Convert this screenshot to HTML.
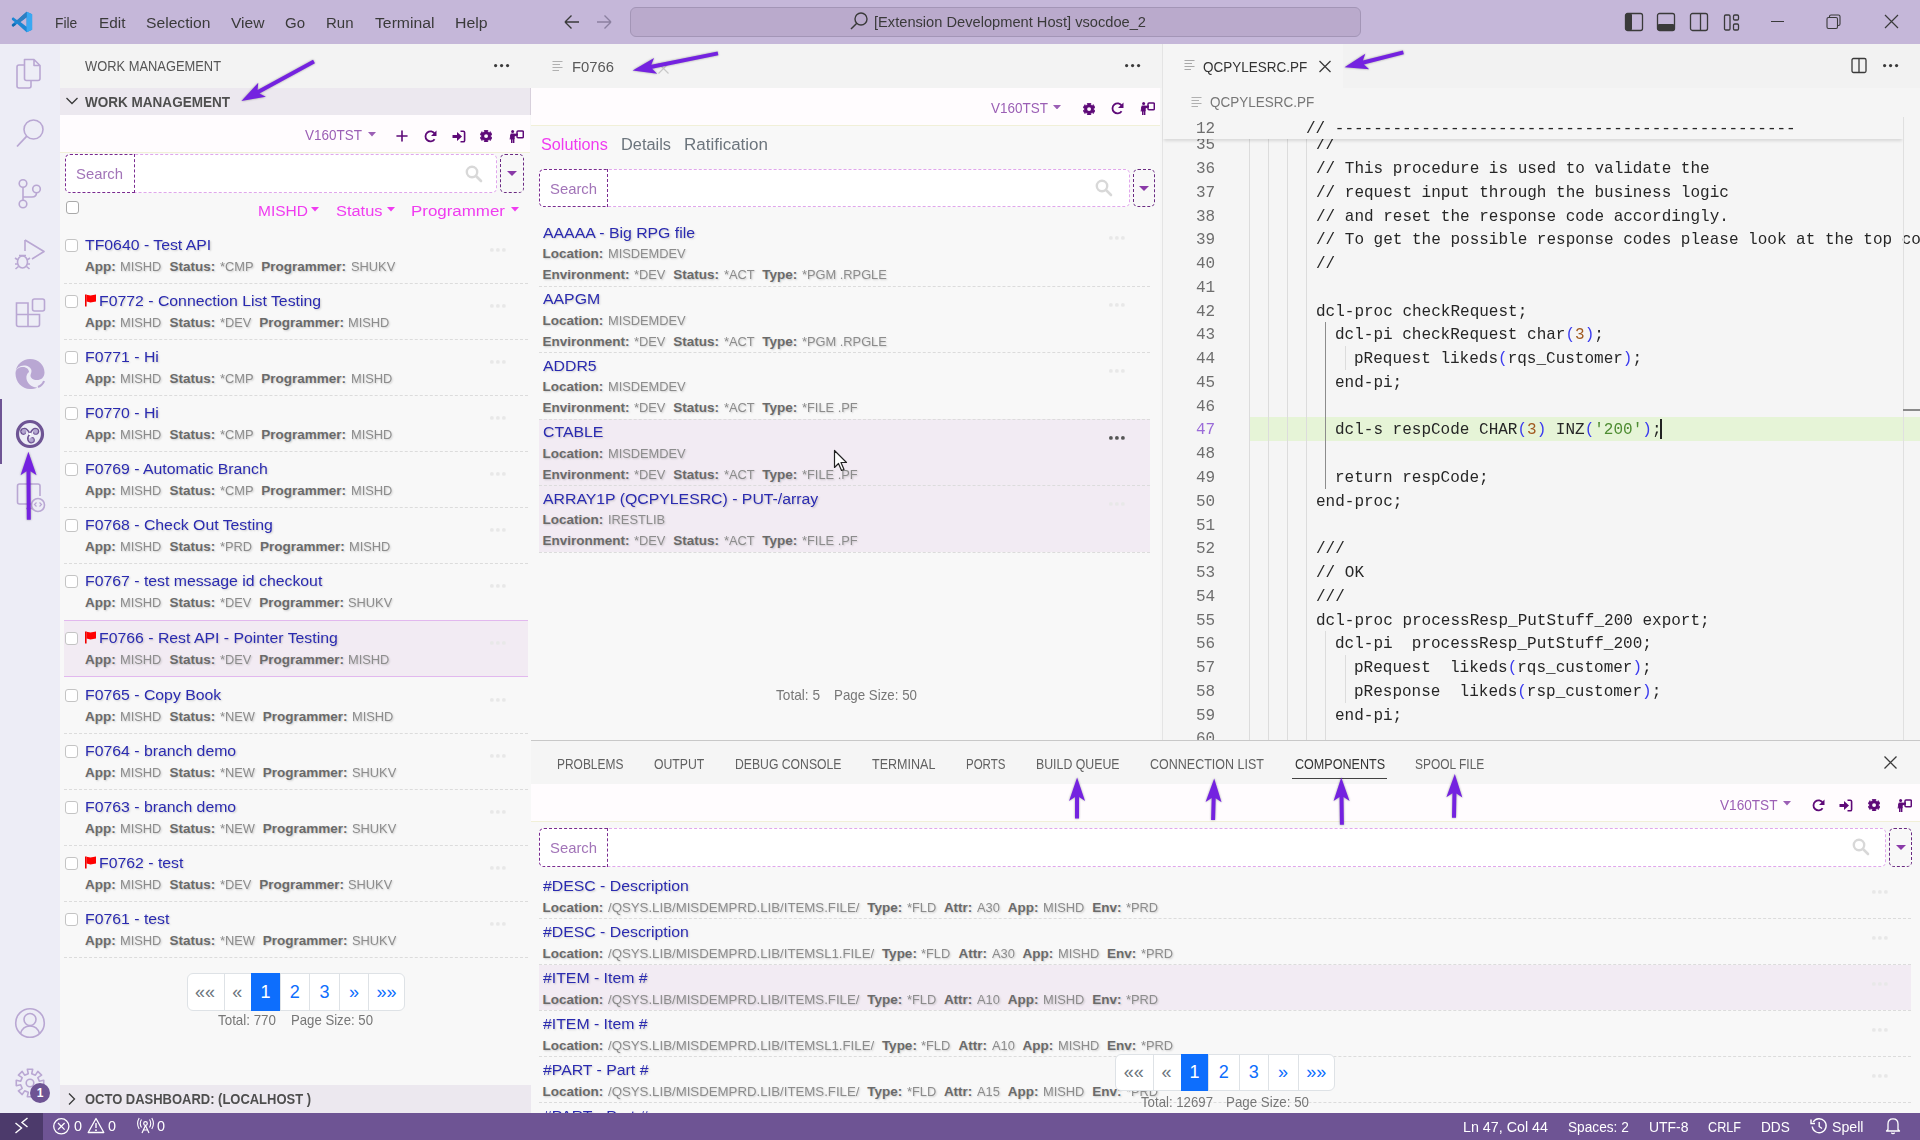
<!DOCTYPE html><html><head><meta charset="utf-8"><style>html,body{margin:0;padding:0;width:1920px;height:1140px;overflow:hidden;background:#f8f8f8;position:relative}</style></head><body><div style="position:absolute;left:0px;top:0px;width:1920px;height:44px;background:#c5b7d9"></div><div style="position:absolute;left:0px;top:44px;width:60px;height:1069px;background:#ededf6"></div><div style="position:absolute;left:60px;top:44px;width:471px;height:44px;background:#f3f3f3"></div><div style="position:absolute;left:60px;top:88px;width:471px;height:27px;background:#ece8ef"></div><div style="position:absolute;left:60px;top:115px;width:470px;height:970px;background:#f8f8f8"></div><div style="position:absolute;left:60px;top:115px;width:470px;height:38px;background:#fffcfe;border-bottom:1px solid #f1f0d8;box-sizing:border-box"></div><div style="position:absolute;left:60px;top:1085px;width:471px;height:28px;background:#ece8ef"></div><div style="position:absolute;left:530px;top:88px;width:1px;height:27px;background:#d8d0dc"></div><div style="position:absolute;left:531px;top:44px;width:632px;height:44px;background:#f3f3f3"></div><div style="position:absolute;left:531px;top:44px;width:147px;height:44px;background:#f3f3f3"></div><div style="position:absolute;left:531px;top:88px;width:629px;height:652px;background:#f8f8f8"></div><div style="position:absolute;left:531px;top:88px;width:629px;height:38px;background:#fffcfe;border-bottom:1px solid #f1f0d8;box-sizing:border-box"></div><div style="position:absolute;left:1160px;top:88px;width:3px;height:652px;background:#f6f6f6"></div><div style="position:absolute;left:1162px;top:44px;width:1px;height:696px;background:#e4e4e4"></div><div style="position:absolute;left:1163px;top:44px;width:757px;height:696px;background:#f5f5f5"></div><div style="position:absolute;left:531px;top:740px;width:1389px;height:1px;background:#c8c8c8"></div><div style="position:absolute;left:531px;top:741px;width:1389px;height:43px;background:#f5f5f5"></div><div style="position:absolute;left:531px;top:784px;width:1389px;height:329px;background:#f8f8f8"></div><div style="position:absolute;left:531px;top:784px;width:1389px;height:38px;background:#fffcfe;border-bottom:1px solid #f1f0d8;box-sizing:border-box"></div><svg style="position:absolute;left:11px;top:11px;" width="22" height="22" viewBox="0 0 22 22"><g transform="scale(0.22)"><path fill-rule="evenodd" fill="#1c87d4" d="M71 3 L96 15 L96 85 L71 97 L28 58 L10 72 L4 67 L4 33 L10 28 L28 42 Z M71 28 L43 50 L71 72 Z M4 40 L17 50 L4 60 Z"/><path fill="#3aa8f2" d="M71 3 L96 15 L96 85 L71 97 Z"/><path fill="#2f7fc2" d="M71 3 L71 28 L38 53 L26 43 Z"/><path fill="#1269b0" d="M4 63 L4 67 L10 72 L23 62 L16 56 Z"/></g></svg><div style="position:absolute;left:55px;top:14.88px;font:400 15.5px/15.5px 'Liberation Sans', sans-serif;color:#3a3a3a;white-space:pre;transform:scaleX(0.8928);transform-origin:0 0;">File</div><div style="position:absolute;left:98.6px;top:14.88px;font:400 15.5px/15.5px 'Liberation Sans', sans-serif;color:#3a3a3a;white-space:pre;transform:scaleX(0.9884);transform-origin:0 0;">Edit</div><div style="position:absolute;left:145.6px;top:14.88px;font:400 15.5px/15.5px 'Liberation Sans', sans-serif;color:#3a3a3a;white-space:pre;transform:scaleX(1.0100);transform-origin:0 0;">Selection</div><div style="position:absolute;left:231px;top:14.88px;font:400 15.5px/15.5px 'Liberation Sans', sans-serif;color:#3a3a3a;white-space:pre;transform:scaleX(1.0055);transform-origin:0 0;">View</div><div style="position:absolute;left:285px;top:14.88px;font:400 15.5px/15.5px 'Liberation Sans', sans-serif;color:#3a3a3a;white-space:pre;transform:scaleX(0.9673);transform-origin:0 0;">Go</div><div style="position:absolute;left:326px;top:14.88px;font:400 15.5px/15.5px 'Liberation Sans', sans-serif;color:#3a3a3a;white-space:pre;transform:scaleX(0.9671);transform-origin:0 0;">Run</div><div style="position:absolute;left:374.5px;top:14.88px;font:400 15.5px/15.5px 'Liberation Sans', sans-serif;color:#3a3a3a;white-space:pre;transform:scaleX(1.0159);transform-origin:0 0;">Terminal</div><div style="position:absolute;left:455px;top:14.88px;font:400 15.5px/15.5px 'Liberation Sans', sans-serif;color:#3a3a3a;white-space:pre;transform:scaleX(1.0226);transform-origin:0 0;">Help</div><svg style="position:absolute;left:562px;top:12px;" width="20" height="20" viewBox="0 0 20 20"><path d="M3 10 H17 M3 10 L9.5 3.5 M3 10 L9.5 16.5" stroke="#3a3a3a" stroke-width="1.4" fill="none"/></svg><svg style="position:absolute;left:594px;top:12px;" width="20" height="20" viewBox="0 0 20 20"><path d="M17 10 H3 M17 10 L10.5 3.5 M17 10 L10.5 16.5" stroke="#8c80a0" stroke-width="1.4" fill="none"/></svg><div style="position:absolute;left:630px;top:7px;width:731px;height:30px;background:#baaacc;border:1px solid #a395b6;border-radius:6px;box-sizing:border-box"></div><svg style="position:absolute;left:849px;top:11px;" width="20" height="20" viewBox="0 0 20 20"><circle cx="12" cy="8" r="6" stroke="#3a3a3a" stroke-width="1.4" fill="none"/><path d="M7.8 12.2 L2 18" stroke="#3a3a3a" stroke-width="1.5"/></svg><div style="position:absolute;left:874px;top:14.38px;font:400 15.5px/15.5px 'Liberation Sans', sans-serif;color:#3a3a3a;white-space:pre;transform:scaleX(0.9452);transform-origin:0 0;">[Extension Development Host] vsocdoe_2</div><svg style="position:absolute;left:1624px;top:12px;" width="20" height="20" viewBox="0 0 20 20"><rect x="1.5" y="1.5" width="17" height="17" rx="2" fill="none" stroke="#3a3a3a" stroke-width="1.3"/><rect x="1.5" y="1.5" width="6.5" height="17" rx="1.5" fill="#3a3a3a"/></svg><svg style="position:absolute;left:1656px;top:12px;" width="20" height="20" viewBox="0 0 20 20"><rect x="1.5" y="1.5" width="17" height="17" rx="2" fill="none" stroke="#3a3a3a" stroke-width="1.3"/><rect x="1.5" y="12" width="17" height="6.5" rx="1.5" fill="#3a3a3a"/></svg><svg style="position:absolute;left:1689px;top:12px;" width="20" height="20" viewBox="0 0 20 20"><rect x="1.5" y="1.5" width="17" height="17" rx="2" fill="none" stroke="#3a3a3a" stroke-width="1.3"/><path d="M11.5 1.5 V18.5" stroke="#3a3a3a" stroke-width="1.3"/></svg><svg style="position:absolute;left:1722px;top:12px;" width="20" height="20" viewBox="0 0 20 20"><rect x="2.5" y="3" width="5.5" height="15" rx="1.2" fill="none" stroke="#3a3a3a" stroke-width="1.3"/><rect x="11.5" y="3" width="5" height="5" rx="1.2" fill="none" stroke="#3a3a3a" stroke-width="1.3"/><rect x="11.5" y="12" width="5" height="6" rx="1.2" fill="none" stroke="#3a3a3a" stroke-width="1.3"/></svg><div style="position:absolute;left:1771px;top:21px;width:13px;height:1px;background:#3a3a3a"></div><svg style="position:absolute;left:1825px;top:13px;" width="18" height="18" viewBox="0 0 18 18"><rect x="2" y="4.5" width="10.5" height="11" rx="1.5" fill="none" stroke="#3a3a3a" stroke-width="1.1"/><path d="M4.5 4.5 V3.5 Q4.5 2 6 2 H13.5 Q15 2 15 3.5 V11 Q15 12.5 13.5 12.5 H12.5" fill="none" stroke="#3a3a3a" stroke-width="1.1"/></svg><svg style="position:absolute;left:1883px;top:13px;" width="17" height="17" viewBox="0 0 17 17"><path d="M2 2 L15 15 M15 2 L2 15" stroke="#3a3a3a" stroke-width="1.2"/></svg><svg style="position:absolute;left:14px;top:56px;" width="32" height="34" viewBox="0 0 32 34"><path d="M10.5 3.5 H20 L26 9.5 V22.5 Q26 24.5 24 24.5 H12.5 Q10.5 24.5 10.5 22.5 Z M20 3.5 V9.5 H26" fill="none" stroke="#b9a7d3" stroke-width="1.6" stroke-linejoin="round"/><path d="M10.5 9 H5 Q3 9 3 11 V30 Q3 32 5 32 H15 Q17 32 17 30 V24.5" fill="none" stroke="#b9a7d3" stroke-width="1.6"/></svg><svg style="position:absolute;left:14px;top:114px;" width="34" height="36" viewBox="0 0 34 36"><circle cx="19.5" cy="15.5" r="9.5" fill="none" stroke="#b9a7d3" stroke-width="1.6"/><path d="M12.8 22.2 L3 32.5" stroke="#b9a7d3" stroke-width="1.8"/></svg><svg style="position:absolute;left:14px;top:174px;" width="30" height="36" viewBox="0 0 30 36"><circle cx="9" cy="9.5" r="3.8" fill="none" stroke="#b9a7d3" stroke-width="1.6"/><circle cx="22.5" cy="15" r="3.8" fill="none" stroke="#b9a7d3" stroke-width="1.6"/><circle cx="9" cy="30" r="3.8" fill="none" stroke="#b9a7d3" stroke-width="1.6"/><path d="M9 13.3 V26.2 M22.5 18.8 Q22.5 23 18 23 H9" fill="none" stroke="#b9a7d3" stroke-width="1.6"/></svg><svg style="position:absolute;left:12px;top:236px;" width="34" height="36" viewBox="0 0 34 36"><path d="M13 4 L32 15.5 L20 23" fill="none" stroke="#b9a7d3" stroke-width="1.6" stroke-linejoin="round"/><path d="M13 4 V15" stroke="#b9a7d3" stroke-width="1.6"/><ellipse cx="10.5" cy="26" rx="5" ry="6" fill="none" stroke="#b9a7d3" stroke-width="1.6"/><path d="M3 22 L6 24 M3 28 H5.5 M3.5 33 L6.5 30.5 M18 22 L15 24 M18 28 H15.5 M17.5 33 L14.5 30.5 M7 19.5 L14 19.5" stroke="#b9a7d3" stroke-width="1.6"/></svg><svg style="position:absolute;left:13px;top:296px;" width="34" height="34" viewBox="0 0 34 34"><path d="M3.5 7 H15 V30.5 H5.5 Q3.5 30.5 3.5 28.5 Z M3.5 18.5 H26.5 V28.5 Q26.5 30.5 24.5 30.5 H15" fill="none" stroke="#b9a7d3" stroke-width="1.6"/><rect x="19.5" y="3" width="12" height="12" rx="2" fill="none" stroke="#b9a7d3" stroke-width="1.6"/></svg><svg style="position:absolute;left:14px;top:357px;" width="32" height="33" viewBox="0 0 32 33"><path d="M16 2 C24.5 2 30.5 8 30.5 15.5 C30.5 20.5 27 23 23 23 C19 23 16.5 21 16.5 18.5 C16.5 17 17.5 16 17.5 14 C17.5 10.5 13.5 8.5 10 8.5 C5.5 8.5 2 11.5 1.5 15 C2.5 7.5 8.5 2 16 2 Z" fill="#b9a7d3"/><path d="M1.5 16.5 C1.5 11.5 5.5 10 9 10 C12.5 10 15 12.5 15 15 C13 16.5 12 19 12.5 22 C13.5 27 18.5 31 23.5 30.5 C21.5 31.5 18.5 32 16 32 C8 32 1.5 25 1.5 16.5 Z" fill="#b9a7d3"/><path d="M24 30 C27.5 28.5 29.5 26 30 24" stroke="#b9a7d3" stroke-width="2" fill="none"/></svg><div style="position:absolute;left:0px;top:399px;width:2px;height:65px;background:#6e5494"></div><svg style="position:absolute;left:15px;top:419px;" width="30" height="30" viewBox="0 0 30 30"><circle cx="15" cy="15" r="12.5" fill="none" stroke="#6e5494" stroke-width="3.2"/><g fill="none" stroke="#6e5494" stroke-width="1.6"><path d="M15 15 Q12 9 9 9.5 Q5.5 10 6 13 Q6.5 15.5 9 15 Q11 14.5 10 12.5"/><path d="M15 15 Q17 10 20 9.5 Q23.5 9.5 23.5 12.5 Q23 15.5 20 15 Q18.5 14.5 19 13"/><path d="M15 15 Q12 18 13 21 Q14 24 17 23.5 Q19.5 23 19 20.5 Q18.5 18.5 16.5 19"/></g><g fill="#a898c8" opacity="0.8"><circle cx="9" cy="12.5" r="2.4"/><circle cx="20.5" cy="12.5" r="2.4"/><circle cx="16.5" cy="21" r="2.4"/></g><circle cx="15" cy="15" r="1.2" fill="#fff"/></svg><svg style="position:absolute;left:14px;top:480px;" width="32" height="34" viewBox="0 0 32 34"><path d="M22 24 H5.5 Q3.5 24 3.5 22 V6 Q3.5 4 5.5 4 H24 Q26 4 26 6 V16" fill="none" stroke="#b9a7d3" stroke-width="1.6"/><path d="M12 28.5 H19" stroke="#b9a7d3" stroke-width="1.6"/><circle cx="24" cy="25" r="6.5" fill="#ededf6" stroke="#b9a7d3" stroke-width="1.6"/><path d="M22.5 22.5 L20.5 24.5 L22.5 26.5 M25.5 22.5 L27.5 24.5 L25.5 26.5" fill="none" stroke="#b9a7d3" stroke-width="1.2"/></svg><svg style="position:absolute;left:14px;top:1007px;" width="32" height="32" viewBox="0 0 32 32"><circle cx="16" cy="16" r="14.3" fill="none" stroke="#b9a7d3" stroke-width="1.6"/><circle cx="16" cy="12.5" r="6" fill="none" stroke="#b9a7d3" stroke-width="1.6"/><path d="M6.5 26.5 C8 21.5 11.5 19 16 19 C20.5 19 24 21.5 25.5 26.5" fill="none" stroke="#b9a7d3" stroke-width="1.6"/></svg><svg style="position:absolute;left:14px;top:1067px;" width="32" height="32" viewBox="0 0 32 32"><path d="M29.74 13.33 L29.74 18.67 L25.34 17.73 L23.83 21.38 L27.61 23.83 L23.83 27.61 L21.38 23.83 L17.73 25.34 L18.67 29.74 L13.33 29.74 L14.27 25.34 L10.62 23.83 L8.17 27.61 L4.39 23.83 L8.17 21.38 L6.66 17.73 L2.26 18.67 L2.26 13.33 L6.66 14.27 L8.17 10.62 L4.39 8.17 L8.17 4.39 L10.62 8.17 L14.27 6.66 L13.33 2.26 L18.67 2.26 L17.73 6.66 L21.38 8.17 L23.83 4.39 L27.61 8.17 L23.83 10.62 L25.34 14.27 Z" fill="none" stroke="#b9a7d3" stroke-width="1.6" stroke-linejoin="round"/><circle cx="16" cy="16" r="3.8" fill="none" stroke="#b9a7d3" stroke-width="1.6"/></svg><div style="position:absolute;left:30px;top:1083px;width:20px;height:20px;border-radius:50%;background:#6e5494;color:#fff;font:700 12px/20px 'Liberation Sans',sans-serif;text-align:center">1</div><div style="position:absolute;left:85.3px;top:58.85px;font:400 14px/14px 'Liberation Sans', sans-serif;color:#555;white-space:pre;transform:scaleX(0.9203);transform-origin:0 0;">WORK MANAGEMENT</div><svg style="position:absolute;left:493.4px;top:63.400000000000006px;" width="17.2" height="5.2" viewBox="0 0 17.2 5.2"><circle cx="2.6" cy="2.6" r="1.6" fill="#3a3a3a"/><circle cx="8.6" cy="2.6" r="1.6" fill="#3a3a3a"/><circle cx="14.6" cy="2.6" r="1.6" fill="#3a3a3a"/></svg><svg style="position:absolute;left:65px;top:95px;" width="14" height="12" viewBox="0 0 14 12"><path d="M1.5 3 L7 8.5 L12.5 3" fill="none" stroke="#3a3a3a" stroke-width="1.3"/></svg><div style="position:absolute;left:85.3px;top:95.15px;font:700 14px/14px 'Liberation Sans', sans-serif;color:#4e4e4e;white-space:pre;transform:scaleX(0.9660);transform-origin:0 0;">WORK MANAGEMENT</div><div style="position:absolute;left:305px;top:127.30px;font:400 15px/15px 'Liberation Sans', sans-serif;color:#9b5fb5;white-space:pre;transform:scaleX(0.8996);transform-origin:0 0;">V160TST</div><svg style="position:absolute;left:367.5px;top:132px;" width="8" height="4.5" viewBox="0 0 8 4.5"><path d="M0 0 H8 L4.0 4.5 Z" fill="#9b5fb5"/></svg><svg style="position:absolute;left:396px;top:130px;" width="12" height="12" viewBox="0 0 12 12"><path d="M6 1 V11 M1 6 H11" stroke="#5e0a78" stroke-width="1.6" stroke-linecap="round"/></svg><svg style="position:absolute;left:424.0px;top:129.8px;" width="13" height="13" viewBox="0 0 13 13"><path d="M10.8 3.8 A5 5 0 1 0 10.6 9.2" fill="none" stroke="#5e0a78" stroke-width="1.8"/><path d="M12.5 0.5 V6 H7 Z" fill="#5e0a78"/></svg><svg style="position:absolute;left:451.5px;top:129.8px;" width="14" height="13" viewBox="0 0 14 13"><path d="M0.5 5 H5 V2 L10 6.5 L5 11 V8 H0.5 Z" fill="#5e0a78"/><path d="M8.5 1.2 H11.2 Q12.6 1.2 12.6 2.6 V10.4 Q12.6 11.8 11.2 11.8 H8.5" fill="none" stroke="#5e0a78" stroke-width="1.6"/></svg><svg style="position:absolute;left:479.9px;top:129.9px;" width="12.2" height="12.2" viewBox="0 0 12.2 12.2"><path d="M7.88 11.93 L4.32 11.93 L4.74 10.53 L2.94 9.49 L1.94 10.56 L0.16 7.47 L1.58 7.14 L1.58 5.06 L0.16 4.73 L1.94 1.64 L2.94 2.71 L4.74 1.67 L4.32 0.27 L7.88 0.27 L7.46 1.67 L9.26 2.71 L10.26 1.64 L12.04 4.73 L10.62 5.06 L10.62 7.14 L12.04 7.47 L10.26 10.56 L9.26 9.49 L7.46 10.53 Z" fill="#5e0a78" stroke="#5e0a78" stroke-width="0.8" stroke-linejoin="round"/><circle cx="6.1" cy="6.1" r="1.95" fill="#fffcfe"/></svg><svg style="position:absolute;left:508px;top:129.5px;" width="16" height="13" viewBox="0 0 16 13"><circle cx="4.6" cy="1.6" r="1.5" fill="#5e0a78"/><rect x="2.3" y="3.6" width="4.4" height="6" rx="1.3" fill="#5e0a78"/><path d="M1.6 9.5 L2.3 5 H3 L2.6 9.5 Z" fill="#5e0a78"/><rect x="3" y="8.5" width="1.5" height="4.5" fill="#5e0a78"/><rect x="4.9" y="8.5" width="1.5" height="4.5" fill="#5e0a78"/><path d="M5.5 3.8 L10 3.4 L10 5.4 L6 6.4 Z" fill="#5e0a78"/><rect x="9" y="0.9" width="6.3" height="6.9" rx="1" fill="none" stroke="#5e0a78" stroke-width="1.5"/></svg><div style="position:absolute;left:65px;top:154px;width:432px;height:39px;border:1px dashed #e0a6ec;border-radius:5px;background:#fff;box-sizing:border-box"></div><div style="position:absolute;left:65px;top:154px;width:70px;height:39px;border:1.5px dashed #7a2a90;border-radius:5px 0 0 5px;background:#fff;box-sizing:border-box"></div><div style="position:absolute;left:75.5px;top:166.10px;font:400 15px/15px 'Liberation Sans', sans-serif;color:#a274b8;white-space:pre;transform:scaleX(0.9889);transform-origin:0 0;">Search</div><svg style="position:absolute;left:465px;top:165px;" width="18" height="18" viewBox="0 0 18 18"><circle cx="7" cy="7" r="5.2" fill="none" stroke="#d8d8d8" stroke-width="2.4"/><path d="M11 11 L16 16" stroke="#d8d8d8" stroke-width="2.6" stroke-linecap="round"/></svg><div style="position:absolute;left:500px;top:154px;width:24px;height:39px;border:1.5px dashed #6a2a82;border-radius:5px;box-sizing:border-box"></div><svg style="position:absolute;left:507.0px;top:171.0px;" width="10" height="5" viewBox="0 0 10 5"><path d="M0 0 H10 L5.0 5 Z" fill="#8a3aa8"/></svg><div style="position:absolute;left:66px;top:201px;width:13px;height:13px;border:1px solid #a9a9a9;border-radius:3px;background:#fff;box-sizing:border-box"></div><div style="position:absolute;left:257.5px;top:202.88px;font:400 15.5px/15.5px 'Liberation Sans', sans-serif;color:#f03cf0;white-space:pre;transform:scaleX(1.0011);transform-origin:0 0;">MISHD</div><svg style="position:absolute;left:311px;top:207px;" width="8" height="4.5" viewBox="0 0 8 4.5"><path d="M0 0 H8 L4.0 4.5 Z" fill="#f03cf0"/></svg><div style="position:absolute;left:335.5px;top:202.88px;font:400 15.5px/15.5px 'Liberation Sans', sans-serif;color:#f03cf0;white-space:pre;transform:scaleX(1.0582);transform-origin:0 0;">Status</div><svg style="position:absolute;left:386.5px;top:207px;" width="8" height="4.5" viewBox="0 0 8 4.5"><path d="M0 0 H8 L4.0 4.5 Z" fill="#f03cf0"/></svg><div style="position:absolute;left:410.5px;top:202.88px;font:400 15.5px/15.5px 'Liberation Sans', sans-serif;color:#f03cf0;white-space:pre;transform:scaleX(1.0914);transform-origin:0 0;">Programmer</div><svg style="position:absolute;left:510.5px;top:207px;" width="8" height="4.5" viewBox="0 0 8 4.5"><path d="M0 0 H8 L4.0 4.5 Z" fill="#f03cf0"/></svg><div style="position:absolute;left:64.5px;top:239px;width:13px;height:13px;border:1px solid #c4c4c4;border-radius:3px;background:#fff;box-sizing:border-box"></div><div style="position:absolute;left:85px;top:236.88px;font:400 15.5px/15.5px 'Liberation Sans', sans-serif;color:#2a2ab0;white-space:pre;transform:scaleX(1.0200);transform-origin:0 0;text-shadow:1px 1px 2px rgba(0,0,0,0.18);">TF0640 - Test API</div><div style="position:absolute;left:85px;top:259.57px;font:700 13.5px/13.5px 'Liberation Sans', sans-serif;color:#6a6a6a;white-space:pre;transform:scaleX(1.0000);transform-origin:0 0;text-shadow:1px 1px 2px rgba(0,0,0,0.18);">App:</div><div style="position:absolute;left:120.2390625px;top:259.57px;font:400 13.5px/13.5px 'Liberation Sans', sans-serif;color:#8c8c8c;white-space:pre;transform:scaleX(0.9500);transform-origin:0 0;text-shadow:1px 1px 2px rgba(0,0,0,0.18);">MISHD</div><div style="position:absolute;left:169.5640625px;top:259.57px;font:700 13.5px/13.5px 'Liberation Sans', sans-serif;color:#6a6a6a;white-space:pre;transform:scaleX(1.0000);transform-origin:0 0;text-shadow:1px 1px 2px rgba(0,0,0,0.18);">Status:</div><div style="position:absolute;left:219.8171875px;top:259.57px;font:400 13.5px/13.5px 'Liberation Sans', sans-serif;color:#8c8c8c;white-space:pre;transform:scaleX(0.9500);transform-origin:0 0;text-shadow:1px 1px 2px rgba(0,0,0,0.18);">*CMP</div><div style="position:absolute;left:261.30765625px;top:259.57px;font:700 13.5px/13.5px 'Liberation Sans', sans-serif;color:#6a6a6a;white-space:pre;transform:scaleX(1.0000);transform-origin:0 0;text-shadow:1px 1px 2px rgba(0,0,0,0.18);">Programmer:</div><div style="position:absolute;left:350.58265625px;top:259.57px;font:400 13.5px/13.5px 'Liberation Sans', sans-serif;color:#8c8c8c;white-space:pre;transform:scaleX(0.9500);transform-origin:0 0;text-shadow:1px 1px 2px rgba(0,0,0,0.18);">SHUKV</div><svg style="position:absolute;left:489.1px;top:247.1px;" width="17.8" height="5.8" viewBox="0 0 17.8 5.8"><circle cx="2.9" cy="2.9" r="1.9" fill="#e8e8e8"/><circle cx="8.9" cy="2.9" r="1.9" fill="#e8e8e8"/><circle cx="14.9" cy="2.9" r="1.9" fill="#e8e8e8"/></svg><div style="position:absolute;left:64px;top:283px;width:464px;height:0;border-top:1px dashed #dcdcdc"></div><div style="position:absolute;left:64.5px;top:295px;width:13px;height:13px;border:1px solid #c4c4c4;border-radius:3px;background:#fff;box-sizing:border-box"></div><svg style="position:absolute;left:85px;top:294px;" width="12" height="13" viewBox="0 0 12 13"><path d="M0.8 0.5 V12.5" stroke="#e00" stroke-width="1.6"/><path d="M1.5 0.8 L5.5 1.6 L11 0.6 V7.6 L5.5 8.4 L1.5 7.6 Z" fill="#f00"/></svg><div style="position:absolute;left:98.5px;top:292.88px;font:400 15.5px/15.5px 'Liberation Sans', sans-serif;color:#2a2ab0;white-space:pre;transform:scaleX(1.0200);transform-origin:0 0;text-shadow:1px 1px 2px rgba(0,0,0,0.18);">F0772 - Connection List Testing</div><div style="position:absolute;left:85px;top:315.57px;font:700 13.5px/13.5px 'Liberation Sans', sans-serif;color:#6a6a6a;white-space:pre;transform:scaleX(1.0000);transform-origin:0 0;text-shadow:1px 1px 2px rgba(0,0,0,0.18);">App:</div><div style="position:absolute;left:120.2390625px;top:315.57px;font:400 13.5px/13.5px 'Liberation Sans', sans-serif;color:#8c8c8c;white-space:pre;transform:scaleX(0.9500);transform-origin:0 0;text-shadow:1px 1px 2px rgba(0,0,0,0.18);">MISHD</div><div style="position:absolute;left:169.5640625px;top:315.57px;font:700 13.5px/13.5px 'Liberation Sans', sans-serif;color:#6a6a6a;white-space:pre;transform:scaleX(1.0000);transform-origin:0 0;text-shadow:1px 1px 2px rgba(0,0,0,0.18);">Status:</div><div style="position:absolute;left:219.8171875px;top:315.57px;font:400 13.5px/13.5px 'Liberation Sans', sans-serif;color:#8c8c8c;white-space:pre;transform:scaleX(0.9500);transform-origin:0 0;text-shadow:1px 1px 2px rgba(0,0,0,0.18);">*DEV</div><div style="position:absolute;left:259.1790625px;top:315.57px;font:700 13.5px/13.5px 'Liberation Sans', sans-serif;color:#6a6a6a;white-space:pre;transform:scaleX(1.0000);transform-origin:0 0;text-shadow:1px 1px 2px rgba(0,0,0,0.18);">Programmer:</div><div style="position:absolute;left:348.45406249999996px;top:315.57px;font:400 13.5px/13.5px 'Liberation Sans', sans-serif;color:#8c8c8c;white-space:pre;transform:scaleX(0.9500);transform-origin:0 0;text-shadow:1px 1px 2px rgba(0,0,0,0.18);">MISHD</div><svg style="position:absolute;left:489.1px;top:303.1px;" width="17.8" height="5.8" viewBox="0 0 17.8 5.8"><circle cx="2.9" cy="2.9" r="1.9" fill="#e8e8e8"/><circle cx="8.9" cy="2.9" r="1.9" fill="#e8e8e8"/><circle cx="14.9" cy="2.9" r="1.9" fill="#e8e8e8"/></svg><div style="position:absolute;left:64px;top:339px;width:464px;height:0;border-top:1px dashed #dcdcdc"></div><div style="position:absolute;left:64.5px;top:351px;width:13px;height:13px;border:1px solid #c4c4c4;border-radius:3px;background:#fff;box-sizing:border-box"></div><div style="position:absolute;left:85px;top:348.88px;font:400 15.5px/15.5px 'Liberation Sans', sans-serif;color:#2a2ab0;white-space:pre;transform:scaleX(1.0200);transform-origin:0 0;text-shadow:1px 1px 2px rgba(0,0,0,0.18);">F0771 - Hi</div><div style="position:absolute;left:85px;top:371.57px;font:700 13.5px/13.5px 'Liberation Sans', sans-serif;color:#6a6a6a;white-space:pre;transform:scaleX(1.0000);transform-origin:0 0;text-shadow:1px 1px 2px rgba(0,0,0,0.18);">App:</div><div style="position:absolute;left:120.2390625px;top:371.57px;font:400 13.5px/13.5px 'Liberation Sans', sans-serif;color:#8c8c8c;white-space:pre;transform:scaleX(0.9500);transform-origin:0 0;text-shadow:1px 1px 2px rgba(0,0,0,0.18);">MISHD</div><div style="position:absolute;left:169.5640625px;top:371.57px;font:700 13.5px/13.5px 'Liberation Sans', sans-serif;color:#6a6a6a;white-space:pre;transform:scaleX(1.0000);transform-origin:0 0;text-shadow:1px 1px 2px rgba(0,0,0,0.18);">Status:</div><div style="position:absolute;left:219.8171875px;top:371.57px;font:400 13.5px/13.5px 'Liberation Sans', sans-serif;color:#8c8c8c;white-space:pre;transform:scaleX(0.9500);transform-origin:0 0;text-shadow:1px 1px 2px rgba(0,0,0,0.18);">*CMP</div><div style="position:absolute;left:261.30765625px;top:371.57px;font:700 13.5px/13.5px 'Liberation Sans', sans-serif;color:#6a6a6a;white-space:pre;transform:scaleX(1.0000);transform-origin:0 0;text-shadow:1px 1px 2px rgba(0,0,0,0.18);">Programmer:</div><div style="position:absolute;left:350.58265625px;top:371.57px;font:400 13.5px/13.5px 'Liberation Sans', sans-serif;color:#8c8c8c;white-space:pre;transform:scaleX(0.9500);transform-origin:0 0;text-shadow:1px 1px 2px rgba(0,0,0,0.18);">MISHD</div><svg style="position:absolute;left:489.1px;top:359.1px;" width="17.8" height="5.8" viewBox="0 0 17.8 5.8"><circle cx="2.9" cy="2.9" r="1.9" fill="#e8e8e8"/><circle cx="8.9" cy="2.9" r="1.9" fill="#e8e8e8"/><circle cx="14.9" cy="2.9" r="1.9" fill="#e8e8e8"/></svg><div style="position:absolute;left:64px;top:395px;width:464px;height:0;border-top:1px dashed #dcdcdc"></div><div style="position:absolute;left:64.5px;top:407px;width:13px;height:13px;border:1px solid #c4c4c4;border-radius:3px;background:#fff;box-sizing:border-box"></div><div style="position:absolute;left:85px;top:404.88px;font:400 15.5px/15.5px 'Liberation Sans', sans-serif;color:#2a2ab0;white-space:pre;transform:scaleX(1.0200);transform-origin:0 0;text-shadow:1px 1px 2px rgba(0,0,0,0.18);">F0770 - Hi</div><div style="position:absolute;left:85px;top:427.57px;font:700 13.5px/13.5px 'Liberation Sans', sans-serif;color:#6a6a6a;white-space:pre;transform:scaleX(1.0000);transform-origin:0 0;text-shadow:1px 1px 2px rgba(0,0,0,0.18);">App:</div><div style="position:absolute;left:120.2390625px;top:427.57px;font:400 13.5px/13.5px 'Liberation Sans', sans-serif;color:#8c8c8c;white-space:pre;transform:scaleX(0.9500);transform-origin:0 0;text-shadow:1px 1px 2px rgba(0,0,0,0.18);">MISHD</div><div style="position:absolute;left:169.5640625px;top:427.57px;font:700 13.5px/13.5px 'Liberation Sans', sans-serif;color:#6a6a6a;white-space:pre;transform:scaleX(1.0000);transform-origin:0 0;text-shadow:1px 1px 2px rgba(0,0,0,0.18);">Status:</div><div style="position:absolute;left:219.8171875px;top:427.57px;font:400 13.5px/13.5px 'Liberation Sans', sans-serif;color:#8c8c8c;white-space:pre;transform:scaleX(0.9500);transform-origin:0 0;text-shadow:1px 1px 2px rgba(0,0,0,0.18);">*CMP</div><div style="position:absolute;left:261.30765625px;top:427.57px;font:700 13.5px/13.5px 'Liberation Sans', sans-serif;color:#6a6a6a;white-space:pre;transform:scaleX(1.0000);transform-origin:0 0;text-shadow:1px 1px 2px rgba(0,0,0,0.18);">Programmer:</div><div style="position:absolute;left:350.58265625px;top:427.57px;font:400 13.5px/13.5px 'Liberation Sans', sans-serif;color:#8c8c8c;white-space:pre;transform:scaleX(0.9500);transform-origin:0 0;text-shadow:1px 1px 2px rgba(0,0,0,0.18);">MISHD</div><svg style="position:absolute;left:489.1px;top:415.1px;" width="17.8" height="5.8" viewBox="0 0 17.8 5.8"><circle cx="2.9" cy="2.9" r="1.9" fill="#e8e8e8"/><circle cx="8.9" cy="2.9" r="1.9" fill="#e8e8e8"/><circle cx="14.9" cy="2.9" r="1.9" fill="#e8e8e8"/></svg><div style="position:absolute;left:64px;top:451px;width:464px;height:0;border-top:1px dashed #dcdcdc"></div><div style="position:absolute;left:64.5px;top:463px;width:13px;height:13px;border:1px solid #c4c4c4;border-radius:3px;background:#fff;box-sizing:border-box"></div><div style="position:absolute;left:85px;top:460.88px;font:400 15.5px/15.5px 'Liberation Sans', sans-serif;color:#2a2ab0;white-space:pre;transform:scaleX(1.0200);transform-origin:0 0;text-shadow:1px 1px 2px rgba(0,0,0,0.18);">F0769 - Automatic Branch</div><div style="position:absolute;left:85px;top:483.57px;font:700 13.5px/13.5px 'Liberation Sans', sans-serif;color:#6a6a6a;white-space:pre;transform:scaleX(1.0000);transform-origin:0 0;text-shadow:1px 1px 2px rgba(0,0,0,0.18);">App:</div><div style="position:absolute;left:120.2390625px;top:483.57px;font:400 13.5px/13.5px 'Liberation Sans', sans-serif;color:#8c8c8c;white-space:pre;transform:scaleX(0.9500);transform-origin:0 0;text-shadow:1px 1px 2px rgba(0,0,0,0.18);">MISHD</div><div style="position:absolute;left:169.5640625px;top:483.57px;font:700 13.5px/13.5px 'Liberation Sans', sans-serif;color:#6a6a6a;white-space:pre;transform:scaleX(1.0000);transform-origin:0 0;text-shadow:1px 1px 2px rgba(0,0,0,0.18);">Status:</div><div style="position:absolute;left:219.8171875px;top:483.57px;font:400 13.5px/13.5px 'Liberation Sans', sans-serif;color:#8c8c8c;white-space:pre;transform:scaleX(0.9500);transform-origin:0 0;text-shadow:1px 1px 2px rgba(0,0,0,0.18);">*CMP</div><div style="position:absolute;left:261.30765625px;top:483.57px;font:700 13.5px/13.5px 'Liberation Sans', sans-serif;color:#6a6a6a;white-space:pre;transform:scaleX(1.0000);transform-origin:0 0;text-shadow:1px 1px 2px rgba(0,0,0,0.18);">Programmer:</div><div style="position:absolute;left:350.58265625px;top:483.57px;font:400 13.5px/13.5px 'Liberation Sans', sans-serif;color:#8c8c8c;white-space:pre;transform:scaleX(0.9500);transform-origin:0 0;text-shadow:1px 1px 2px rgba(0,0,0,0.18);">MISHD</div><svg style="position:absolute;left:489.1px;top:471.1px;" width="17.8" height="5.8" viewBox="0 0 17.8 5.8"><circle cx="2.9" cy="2.9" r="1.9" fill="#e8e8e8"/><circle cx="8.9" cy="2.9" r="1.9" fill="#e8e8e8"/><circle cx="14.9" cy="2.9" r="1.9" fill="#e8e8e8"/></svg><div style="position:absolute;left:64px;top:507px;width:464px;height:0;border-top:1px dashed #dcdcdc"></div><div style="position:absolute;left:64.5px;top:519px;width:13px;height:13px;border:1px solid #c4c4c4;border-radius:3px;background:#fff;box-sizing:border-box"></div><div style="position:absolute;left:85px;top:516.88px;font:400 15.5px/15.5px 'Liberation Sans', sans-serif;color:#2a2ab0;white-space:pre;transform:scaleX(1.0200);transform-origin:0 0;text-shadow:1px 1px 2px rgba(0,0,0,0.18);">F0768 - Check Out Testing</div><div style="position:absolute;left:85px;top:539.57px;font:700 13.5px/13.5px 'Liberation Sans', sans-serif;color:#6a6a6a;white-space:pre;transform:scaleX(1.0000);transform-origin:0 0;text-shadow:1px 1px 2px rgba(0,0,0,0.18);">App:</div><div style="position:absolute;left:120.2390625px;top:539.57px;font:400 13.5px/13.5px 'Liberation Sans', sans-serif;color:#8c8c8c;white-space:pre;transform:scaleX(0.9500);transform-origin:0 0;text-shadow:1px 1px 2px rgba(0,0,0,0.18);">MISHD</div><div style="position:absolute;left:169.5640625px;top:539.57px;font:700 13.5px/13.5px 'Liberation Sans', sans-serif;color:#6a6a6a;white-space:pre;transform:scaleX(1.0000);transform-origin:0 0;text-shadow:1px 1px 2px rgba(0,0,0,0.18);">Status:</div><div style="position:absolute;left:219.8171875px;top:539.57px;font:400 13.5px/13.5px 'Liberation Sans', sans-serif;color:#8c8c8c;white-space:pre;transform:scaleX(0.9500);transform-origin:0 0;text-shadow:1px 1px 2px rgba(0,0,0,0.18);">*PRD</div><div style="position:absolute;left:259.88710937499997px;top:539.57px;font:700 13.5px/13.5px 'Liberation Sans', sans-serif;color:#6a6a6a;white-space:pre;transform:scaleX(1.0000);transform-origin:0 0;text-shadow:1px 1px 2px rgba(0,0,0,0.18);">Programmer:</div><div style="position:absolute;left:349.162109375px;top:539.57px;font:400 13.5px/13.5px 'Liberation Sans', sans-serif;color:#8c8c8c;white-space:pre;transform:scaleX(0.9500);transform-origin:0 0;text-shadow:1px 1px 2px rgba(0,0,0,0.18);">MISHD</div><svg style="position:absolute;left:489.1px;top:527.1px;" width="17.8" height="5.8" viewBox="0 0 17.8 5.8"><circle cx="2.9" cy="2.9" r="1.9" fill="#e8e8e8"/><circle cx="8.9" cy="2.9" r="1.9" fill="#e8e8e8"/><circle cx="14.9" cy="2.9" r="1.9" fill="#e8e8e8"/></svg><div style="position:absolute;left:64px;top:563px;width:464px;height:0;border-top:1px dashed #dcdcdc"></div><div style="position:absolute;left:64.5px;top:575px;width:13px;height:13px;border:1px solid #c4c4c4;border-radius:3px;background:#fff;box-sizing:border-box"></div><div style="position:absolute;left:85px;top:572.88px;font:400 15.5px/15.5px 'Liberation Sans', sans-serif;color:#2a2ab0;white-space:pre;transform:scaleX(1.0200);transform-origin:0 0;text-shadow:1px 1px 2px rgba(0,0,0,0.18);">F0767 - test message id checkout</div><div style="position:absolute;left:85px;top:595.57px;font:700 13.5px/13.5px 'Liberation Sans', sans-serif;color:#6a6a6a;white-space:pre;transform:scaleX(1.0000);transform-origin:0 0;text-shadow:1px 1px 2px rgba(0,0,0,0.18);">App:</div><div style="position:absolute;left:120.2390625px;top:595.57px;font:400 13.5px/13.5px 'Liberation Sans', sans-serif;color:#8c8c8c;white-space:pre;transform:scaleX(0.9500);transform-origin:0 0;text-shadow:1px 1px 2px rgba(0,0,0,0.18);">MISHD</div><div style="position:absolute;left:169.5640625px;top:595.57px;font:700 13.5px/13.5px 'Liberation Sans', sans-serif;color:#6a6a6a;white-space:pre;transform:scaleX(1.0000);transform-origin:0 0;text-shadow:1px 1px 2px rgba(0,0,0,0.18);">Status:</div><div style="position:absolute;left:219.8171875px;top:595.57px;font:400 13.5px/13.5px 'Liberation Sans', sans-serif;color:#8c8c8c;white-space:pre;transform:scaleX(0.9500);transform-origin:0 0;text-shadow:1px 1px 2px rgba(0,0,0,0.18);">*DEV</div><div style="position:absolute;left:259.1790625px;top:595.57px;font:700 13.5px/13.5px 'Liberation Sans', sans-serif;color:#6a6a6a;white-space:pre;transform:scaleX(1.0000);transform-origin:0 0;text-shadow:1px 1px 2px rgba(0,0,0,0.18);">Programmer:</div><div style="position:absolute;left:348.45406249999996px;top:595.57px;font:400 13.5px/13.5px 'Liberation Sans', sans-serif;color:#8c8c8c;white-space:pre;transform:scaleX(0.9500);transform-origin:0 0;text-shadow:1px 1px 2px rgba(0,0,0,0.18);">SHUKV</div><svg style="position:absolute;left:489.1px;top:583.1px;" width="17.8" height="5.8" viewBox="0 0 17.8 5.8"><circle cx="2.9" cy="2.9" r="1.9" fill="#e8e8e8"/><circle cx="8.9" cy="2.9" r="1.9" fill="#e8e8e8"/><circle cx="14.9" cy="2.9" r="1.9" fill="#e8e8e8"/></svg><div style="position:absolute;left:64px;top:620px;width:464px;height:57px;background:#f2ebf3;border-top:1px solid #e2b8ee;border-bottom:1px solid #e2b8ee;box-sizing:border-box"></div><div style="position:absolute;left:64.5px;top:632px;width:13px;height:13px;border:1px solid #c4c4c4;border-radius:3px;background:#fff;box-sizing:border-box"></div><svg style="position:absolute;left:85px;top:631px;" width="12" height="13" viewBox="0 0 12 13"><path d="M0.8 0.5 V12.5" stroke="#e00" stroke-width="1.6"/><path d="M1.5 0.8 L5.5 1.6 L11 0.6 V7.6 L5.5 8.4 L1.5 7.6 Z" fill="#f00"/></svg><div style="position:absolute;left:98.5px;top:629.88px;font:400 15.5px/15.5px 'Liberation Sans', sans-serif;color:#2a2ab0;white-space:pre;transform:scaleX(1.0200);transform-origin:0 0;text-shadow:1px 1px 2px rgba(0,0,0,0.18);">F0766 - Rest API - Pointer Testing</div><div style="position:absolute;left:85px;top:652.57px;font:700 13.5px/13.5px 'Liberation Sans', sans-serif;color:#6a6a6a;white-space:pre;transform:scaleX(1.0000);transform-origin:0 0;text-shadow:1px 1px 2px rgba(0,0,0,0.18);">App:</div><div style="position:absolute;left:120.2390625px;top:652.57px;font:400 13.5px/13.5px 'Liberation Sans', sans-serif;color:#8c8c8c;white-space:pre;transform:scaleX(0.9500);transform-origin:0 0;text-shadow:1px 1px 2px rgba(0,0,0,0.18);">MISHD</div><div style="position:absolute;left:169.5640625px;top:652.57px;font:700 13.5px/13.5px 'Liberation Sans', sans-serif;color:#6a6a6a;white-space:pre;transform:scaleX(1.0000);transform-origin:0 0;text-shadow:1px 1px 2px rgba(0,0,0,0.18);">Status:</div><div style="position:absolute;left:219.8171875px;top:652.57px;font:400 13.5px/13.5px 'Liberation Sans', sans-serif;color:#8c8c8c;white-space:pre;transform:scaleX(0.9500);transform-origin:0 0;text-shadow:1px 1px 2px rgba(0,0,0,0.18);">*DEV</div><div style="position:absolute;left:259.1790625px;top:652.57px;font:700 13.5px/13.5px 'Liberation Sans', sans-serif;color:#6a6a6a;white-space:pre;transform:scaleX(1.0000);transform-origin:0 0;text-shadow:1px 1px 2px rgba(0,0,0,0.18);">Programmer:</div><div style="position:absolute;left:348.45406249999996px;top:652.57px;font:400 13.5px/13.5px 'Liberation Sans', sans-serif;color:#8c8c8c;white-space:pre;transform:scaleX(0.9500);transform-origin:0 0;text-shadow:1px 1px 2px rgba(0,0,0,0.18);">MISHD</div><svg style="position:absolute;left:489.1px;top:640.1px;" width="17.8" height="5.8" viewBox="0 0 17.8 5.8"><circle cx="2.9" cy="2.9" r="1.9" fill="#e8e8e8"/><circle cx="8.9" cy="2.9" r="1.9" fill="#e8e8e8"/><circle cx="14.9" cy="2.9" r="1.9" fill="#e8e8e8"/></svg><div style="position:absolute;left:64.5px;top:689px;width:13px;height:13px;border:1px solid #c4c4c4;border-radius:3px;background:#fff;box-sizing:border-box"></div><div style="position:absolute;left:85px;top:686.88px;font:400 15.5px/15.5px 'Liberation Sans', sans-serif;color:#2a2ab0;white-space:pre;transform:scaleX(1.0200);transform-origin:0 0;text-shadow:1px 1px 2px rgba(0,0,0,0.18);">F0765 - Copy Book</div><div style="position:absolute;left:85px;top:709.57px;font:700 13.5px/13.5px 'Liberation Sans', sans-serif;color:#6a6a6a;white-space:pre;transform:scaleX(1.0000);transform-origin:0 0;text-shadow:1px 1px 2px rgba(0,0,0,0.18);">App:</div><div style="position:absolute;left:120.2390625px;top:709.57px;font:400 13.5px/13.5px 'Liberation Sans', sans-serif;color:#8c8c8c;white-space:pre;transform:scaleX(0.9500);transform-origin:0 0;text-shadow:1px 1px 2px rgba(0,0,0,0.18);">MISHD</div><div style="position:absolute;left:169.5640625px;top:709.57px;font:700 13.5px/13.5px 'Liberation Sans', sans-serif;color:#6a6a6a;white-space:pre;transform:scaleX(1.0000);transform-origin:0 0;text-shadow:1px 1px 2px rgba(0,0,0,0.18);">Status:</div><div style="position:absolute;left:219.8171875px;top:709.57px;font:400 13.5px/13.5px 'Liberation Sans', sans-serif;color:#8c8c8c;white-space:pre;transform:scaleX(0.9500);transform-origin:0 0;text-shadow:1px 1px 2px rgba(0,0,0,0.18);">*NEW</div><div style="position:absolute;left:262.7296875px;top:709.57px;font:700 13.5px/13.5px 'Liberation Sans', sans-serif;color:#6a6a6a;white-space:pre;transform:scaleX(1.0000);transform-origin:0 0;text-shadow:1px 1px 2px rgba(0,0,0,0.18);">Programmer:</div><div style="position:absolute;left:352.00468750000005px;top:709.57px;font:400 13.5px/13.5px 'Liberation Sans', sans-serif;color:#8c8c8c;white-space:pre;transform:scaleX(0.9500);transform-origin:0 0;text-shadow:1px 1px 2px rgba(0,0,0,0.18);">MISHD</div><svg style="position:absolute;left:489.1px;top:697.1px;" width="17.8" height="5.8" viewBox="0 0 17.8 5.8"><circle cx="2.9" cy="2.9" r="1.9" fill="#e8e8e8"/><circle cx="8.9" cy="2.9" r="1.9" fill="#e8e8e8"/><circle cx="14.9" cy="2.9" r="1.9" fill="#e8e8e8"/></svg><div style="position:absolute;left:64px;top:733px;width:464px;height:0;border-top:1px dashed #dcdcdc"></div><div style="position:absolute;left:64.5px;top:745px;width:13px;height:13px;border:1px solid #c4c4c4;border-radius:3px;background:#fff;box-sizing:border-box"></div><div style="position:absolute;left:85px;top:742.88px;font:400 15.5px/15.5px 'Liberation Sans', sans-serif;color:#2a2ab0;white-space:pre;transform:scaleX(1.0200);transform-origin:0 0;text-shadow:1px 1px 2px rgba(0,0,0,0.18);">F0764 - branch demo</div><div style="position:absolute;left:85px;top:765.57px;font:700 13.5px/13.5px 'Liberation Sans', sans-serif;color:#6a6a6a;white-space:pre;transform:scaleX(1.0000);transform-origin:0 0;text-shadow:1px 1px 2px rgba(0,0,0,0.18);">App:</div><div style="position:absolute;left:120.2390625px;top:765.57px;font:400 13.5px/13.5px 'Liberation Sans', sans-serif;color:#8c8c8c;white-space:pre;transform:scaleX(0.9500);transform-origin:0 0;text-shadow:1px 1px 2px rgba(0,0,0,0.18);">MISHD</div><div style="position:absolute;left:169.5640625px;top:765.57px;font:700 13.5px/13.5px 'Liberation Sans', sans-serif;color:#6a6a6a;white-space:pre;transform:scaleX(1.0000);transform-origin:0 0;text-shadow:1px 1px 2px rgba(0,0,0,0.18);">Status:</div><div style="position:absolute;left:219.8171875px;top:765.57px;font:400 13.5px/13.5px 'Liberation Sans', sans-serif;color:#8c8c8c;white-space:pre;transform:scaleX(0.9500);transform-origin:0 0;text-shadow:1px 1px 2px rgba(0,0,0,0.18);">*NEW</div><div style="position:absolute;left:262.7296875px;top:765.57px;font:700 13.5px/13.5px 'Liberation Sans', sans-serif;color:#6a6a6a;white-space:pre;transform:scaleX(1.0000);transform-origin:0 0;text-shadow:1px 1px 2px rgba(0,0,0,0.18);">Programmer:</div><div style="position:absolute;left:352.00468750000005px;top:765.57px;font:400 13.5px/13.5px 'Liberation Sans', sans-serif;color:#8c8c8c;white-space:pre;transform:scaleX(0.9500);transform-origin:0 0;text-shadow:1px 1px 2px rgba(0,0,0,0.18);">SHUKV</div><svg style="position:absolute;left:489.1px;top:753.1px;" width="17.8" height="5.8" viewBox="0 0 17.8 5.8"><circle cx="2.9" cy="2.9" r="1.9" fill="#e8e8e8"/><circle cx="8.9" cy="2.9" r="1.9" fill="#e8e8e8"/><circle cx="14.9" cy="2.9" r="1.9" fill="#e8e8e8"/></svg><div style="position:absolute;left:64px;top:789px;width:464px;height:0;border-top:1px dashed #dcdcdc"></div><div style="position:absolute;left:64.5px;top:801px;width:13px;height:13px;border:1px solid #c4c4c4;border-radius:3px;background:#fff;box-sizing:border-box"></div><div style="position:absolute;left:85px;top:798.88px;font:400 15.5px/15.5px 'Liberation Sans', sans-serif;color:#2a2ab0;white-space:pre;transform:scaleX(1.0200);transform-origin:0 0;text-shadow:1px 1px 2px rgba(0,0,0,0.18);">F0763 - branch demo</div><div style="position:absolute;left:85px;top:821.57px;font:700 13.5px/13.5px 'Liberation Sans', sans-serif;color:#6a6a6a;white-space:pre;transform:scaleX(1.0000);transform-origin:0 0;text-shadow:1px 1px 2px rgba(0,0,0,0.18);">App:</div><div style="position:absolute;left:120.2390625px;top:821.57px;font:400 13.5px/13.5px 'Liberation Sans', sans-serif;color:#8c8c8c;white-space:pre;transform:scaleX(0.9500);transform-origin:0 0;text-shadow:1px 1px 2px rgba(0,0,0,0.18);">MISHD</div><div style="position:absolute;left:169.5640625px;top:821.57px;font:700 13.5px/13.5px 'Liberation Sans', sans-serif;color:#6a6a6a;white-space:pre;transform:scaleX(1.0000);transform-origin:0 0;text-shadow:1px 1px 2px rgba(0,0,0,0.18);">Status:</div><div style="position:absolute;left:219.8171875px;top:821.57px;font:400 13.5px/13.5px 'Liberation Sans', sans-serif;color:#8c8c8c;white-space:pre;transform:scaleX(0.9500);transform-origin:0 0;text-shadow:1px 1px 2px rgba(0,0,0,0.18);">*NEW</div><div style="position:absolute;left:262.7296875px;top:821.57px;font:700 13.5px/13.5px 'Liberation Sans', sans-serif;color:#6a6a6a;white-space:pre;transform:scaleX(1.0000);transform-origin:0 0;text-shadow:1px 1px 2px rgba(0,0,0,0.18);">Programmer:</div><div style="position:absolute;left:352.00468750000005px;top:821.57px;font:400 13.5px/13.5px 'Liberation Sans', sans-serif;color:#8c8c8c;white-space:pre;transform:scaleX(0.9500);transform-origin:0 0;text-shadow:1px 1px 2px rgba(0,0,0,0.18);">SHUKV</div><svg style="position:absolute;left:489.1px;top:809.1px;" width="17.8" height="5.8" viewBox="0 0 17.8 5.8"><circle cx="2.9" cy="2.9" r="1.9" fill="#e8e8e8"/><circle cx="8.9" cy="2.9" r="1.9" fill="#e8e8e8"/><circle cx="14.9" cy="2.9" r="1.9" fill="#e8e8e8"/></svg><div style="position:absolute;left:64px;top:845px;width:464px;height:0;border-top:1px dashed #dcdcdc"></div><div style="position:absolute;left:64.5px;top:857px;width:13px;height:13px;border:1px solid #c4c4c4;border-radius:3px;background:#fff;box-sizing:border-box"></div><svg style="position:absolute;left:85px;top:856px;" width="12" height="13" viewBox="0 0 12 13"><path d="M0.8 0.5 V12.5" stroke="#e00" stroke-width="1.6"/><path d="M1.5 0.8 L5.5 1.6 L11 0.6 V7.6 L5.5 8.4 L1.5 7.6 Z" fill="#f00"/></svg><div style="position:absolute;left:98.5px;top:854.88px;font:400 15.5px/15.5px 'Liberation Sans', sans-serif;color:#2a2ab0;white-space:pre;transform:scaleX(1.0200);transform-origin:0 0;text-shadow:1px 1px 2px rgba(0,0,0,0.18);">F0762 - test</div><div style="position:absolute;left:85px;top:877.57px;font:700 13.5px/13.5px 'Liberation Sans', sans-serif;color:#6a6a6a;white-space:pre;transform:scaleX(1.0000);transform-origin:0 0;text-shadow:1px 1px 2px rgba(0,0,0,0.18);">App:</div><div style="position:absolute;left:120.2390625px;top:877.57px;font:400 13.5px/13.5px 'Liberation Sans', sans-serif;color:#8c8c8c;white-space:pre;transform:scaleX(0.9500);transform-origin:0 0;text-shadow:1px 1px 2px rgba(0,0,0,0.18);">MISHD</div><div style="position:absolute;left:169.5640625px;top:877.57px;font:700 13.5px/13.5px 'Liberation Sans', sans-serif;color:#6a6a6a;white-space:pre;transform:scaleX(1.0000);transform-origin:0 0;text-shadow:1px 1px 2px rgba(0,0,0,0.18);">Status:</div><div style="position:absolute;left:219.8171875px;top:877.57px;font:400 13.5px/13.5px 'Liberation Sans', sans-serif;color:#8c8c8c;white-space:pre;transform:scaleX(0.9500);transform-origin:0 0;text-shadow:1px 1px 2px rgba(0,0,0,0.18);">*DEV</div><div style="position:absolute;left:259.1790625px;top:877.57px;font:700 13.5px/13.5px 'Liberation Sans', sans-serif;color:#6a6a6a;white-space:pre;transform:scaleX(1.0000);transform-origin:0 0;text-shadow:1px 1px 2px rgba(0,0,0,0.18);">Programmer:</div><div style="position:absolute;left:348.45406249999996px;top:877.57px;font:400 13.5px/13.5px 'Liberation Sans', sans-serif;color:#8c8c8c;white-space:pre;transform:scaleX(0.9500);transform-origin:0 0;text-shadow:1px 1px 2px rgba(0,0,0,0.18);">SHUKV</div><svg style="position:absolute;left:489.1px;top:865.1px;" width="17.8" height="5.8" viewBox="0 0 17.8 5.8"><circle cx="2.9" cy="2.9" r="1.9" fill="#e8e8e8"/><circle cx="8.9" cy="2.9" r="1.9" fill="#e8e8e8"/><circle cx="14.9" cy="2.9" r="1.9" fill="#e8e8e8"/></svg><div style="position:absolute;left:64px;top:901px;width:464px;height:0;border-top:1px dashed #dcdcdc"></div><div style="position:absolute;left:64.5px;top:913px;width:13px;height:13px;border:1px solid #c4c4c4;border-radius:3px;background:#fff;box-sizing:border-box"></div><div style="position:absolute;left:85px;top:910.88px;font:400 15.5px/15.5px 'Liberation Sans', sans-serif;color:#2a2ab0;white-space:pre;transform:scaleX(1.0200);transform-origin:0 0;text-shadow:1px 1px 2px rgba(0,0,0,0.18);">F0761 - test</div><div style="position:absolute;left:85px;top:933.57px;font:700 13.5px/13.5px 'Liberation Sans', sans-serif;color:#6a6a6a;white-space:pre;transform:scaleX(1.0000);transform-origin:0 0;text-shadow:1px 1px 2px rgba(0,0,0,0.18);">App:</div><div style="position:absolute;left:120.2390625px;top:933.57px;font:400 13.5px/13.5px 'Liberation Sans', sans-serif;color:#8c8c8c;white-space:pre;transform:scaleX(0.9500);transform-origin:0 0;text-shadow:1px 1px 2px rgba(0,0,0,0.18);">MISHD</div><div style="position:absolute;left:169.5640625px;top:933.57px;font:700 13.5px/13.5px 'Liberation Sans', sans-serif;color:#6a6a6a;white-space:pre;transform:scaleX(1.0000);transform-origin:0 0;text-shadow:1px 1px 2px rgba(0,0,0,0.18);">Status:</div><div style="position:absolute;left:219.8171875px;top:933.57px;font:400 13.5px/13.5px 'Liberation Sans', sans-serif;color:#8c8c8c;white-space:pre;transform:scaleX(0.9500);transform-origin:0 0;text-shadow:1px 1px 2px rgba(0,0,0,0.18);">*NEW</div><div style="position:absolute;left:262.7296875px;top:933.57px;font:700 13.5px/13.5px 'Liberation Sans', sans-serif;color:#6a6a6a;white-space:pre;transform:scaleX(1.0000);transform-origin:0 0;text-shadow:1px 1px 2px rgba(0,0,0,0.18);">Programmer:</div><div style="position:absolute;left:352.00468750000005px;top:933.57px;font:400 13.5px/13.5px 'Liberation Sans', sans-serif;color:#8c8c8c;white-space:pre;transform:scaleX(0.9500);transform-origin:0 0;text-shadow:1px 1px 2px rgba(0,0,0,0.18);">SHUKV</div><svg style="position:absolute;left:489.1px;top:921.1px;" width="17.8" height="5.8" viewBox="0 0 17.8 5.8"><circle cx="2.9" cy="2.9" r="1.9" fill="#e8e8e8"/><circle cx="8.9" cy="2.9" r="1.9" fill="#e8e8e8"/><circle cx="14.9" cy="2.9" r="1.9" fill="#e8e8e8"/></svg><div style="position:absolute;left:64px;top:957px;width:464px;height:0;border-top:1px dashed #dcdcdc"></div><div style="position:absolute;left:186.5px;top:973px;width:218.0px;height:38px;border:1px solid #dee2e6;border-radius:6px;background:#fff;box-sizing:border-box"></div><div style="position:absolute;left:186.5px;top:973px;width:37px;height:38px;font:400 18px/38px 'Liberation Sans',sans-serif;color:#6c757d;text-align:center">&laquo;&laquo;</div><div style="position:absolute;left:223.5px;top:973px;width:1px;height:38px;background:#dee2e6"></div><div style="position:absolute;left:223.5px;top:973px;width:27.5px;height:38px;font:400 18px/38px 'Liberation Sans',sans-serif;color:#6c757d;text-align:center">&laquo;</div><div style="position:absolute;left:251.0px;top:973px;width:29px;height:38px;background:#0d6efd"></div><div style="position:absolute;left:251.0px;top:973px;width:29px;height:38px;font:400 18px/38px 'Liberation Sans',sans-serif;color:#fff;text-align:center">1</div><div style="position:absolute;left:280.0px;top:973px;width:1px;height:38px;background:#dee2e6"></div><div style="position:absolute;left:280.0px;top:973px;width:29.4px;height:38px;font:400 18px/38px 'Liberation Sans',sans-serif;color:#0d6efd;text-align:center">2</div><div style="position:absolute;left:309.4px;top:973px;width:1px;height:38px;background:#dee2e6"></div><div style="position:absolute;left:309.4px;top:973px;width:30px;height:38px;font:400 18px/38px 'Liberation Sans',sans-serif;color:#0d6efd;text-align:center">3</div><div style="position:absolute;left:339.4px;top:973px;width:1px;height:38px;background:#dee2e6"></div><div style="position:absolute;left:339.4px;top:973px;width:29px;height:38px;font:400 18px/38px 'Liberation Sans',sans-serif;color:#0d6efd;text-align:center">&raquo;</div><div style="position:absolute;left:368.4px;top:973px;width:1px;height:38px;background:#dee2e6"></div><div style="position:absolute;left:368.4px;top:973px;width:36.1px;height:38px;font:400 18px/38px 'Liberation Sans',sans-serif;color:#0d6efd;text-align:center">&raquo;&raquo;</div><div style="position:absolute;left:218px;top:1013.22px;font:400 14.5px/14.5px 'Liberation Sans', sans-serif;color:#777;white-space:pre;transform:scaleX(0.9224);transform-origin:0 0;">Total: 770</div><div style="position:absolute;left:291px;top:1013.22px;font:400 14.5px/14.5px 'Liberation Sans', sans-serif;color:#777;white-space:pre;transform:scaleX(0.9082);transform-origin:0 0;">Page Size: 50</div><svg style="position:absolute;left:65px;top:1092px;" width="14" height="14" viewBox="0 0 14 14"><path d="M4 1.5 L9.5 7 L4 12.5" fill="none" stroke="#3a3a3a" stroke-width="1.3"/></svg><div style="position:absolute;left:85.3px;top:1092.15px;font:700 14px/14px 'Liberation Sans', sans-serif;color:#4e4e4e;white-space:pre;transform:scaleX(0.9264);transform-origin:0 0;">OCTO DASHBOARD: (LOCALHOST )</div><svg style="position:absolute;left:552px;top:59.5px;" width="12" height="12" viewBox="0 0 12 12"><path d="M0.5 1.5 H10.5 M0.5 4.5 H8 M0.5 7.5 H10.5 M0.5 10.5 H7" stroke="#b0b0b0" stroke-width="1.2"/></svg><div style="position:absolute;left:572px;top:58.88px;font:400 15.5px/15.5px 'Liberation Sans', sans-serif;color:#5a5a5a;white-space:pre;transform:scaleX(0.9556);transform-origin:0 0;">F0766</div><svg style="position:absolute;left:657px;top:62px;" width="13" height="13" viewBox="0 0 13 13"><path d="M1.5 1.5 L11.5 11.5 M11.5 1.5 L1.5 11.5" stroke="#c8c8c8" stroke-width="1.2"/></svg><svg style="position:absolute;left:1124.4px;top:63.400000000000006px;" width="17.2" height="5.2" viewBox="0 0 17.2 5.2"><circle cx="2.6" cy="2.6" r="1.6" fill="#3a3a3a"/><circle cx="8.6" cy="2.6" r="1.6" fill="#3a3a3a"/><circle cx="14.6" cy="2.6" r="1.6" fill="#3a3a3a"/></svg><div style="position:absolute;left:991px;top:100.30px;font:400 15px/15px 'Liberation Sans', sans-serif;color:#9b5fb5;white-space:pre;transform:scaleX(0.8996);transform-origin:0 0;">V160TST</div><svg style="position:absolute;left:1053.4px;top:104.8px;" width="8" height="4.5" viewBox="0 0 8 4.5"><path d="M0 0 H8 L4.0 4.5 Z" fill="#9b5fb5"/></svg><svg style="position:absolute;left:1082.9px;top:102.9px;" width="12.2" height="12.2" viewBox="0 0 12.2 12.2"><path d="M7.88 11.93 L4.32 11.93 L4.74 10.53 L2.94 9.49 L1.94 10.56 L0.16 7.47 L1.58 7.14 L1.58 5.06 L0.16 4.73 L1.94 1.64 L2.94 2.71 L4.74 1.67 L4.32 0.27 L7.88 0.27 L7.46 1.67 L9.26 2.71 L10.26 1.64 L12.04 4.73 L10.62 5.06 L10.62 7.14 L12.04 7.47 L10.26 10.56 L9.26 9.49 L7.46 10.53 Z" fill="#5e0a78" stroke="#5e0a78" stroke-width="0.8" stroke-linejoin="round"/><circle cx="6.1" cy="6.1" r="1.95" fill="#fffcfe"/></svg><svg style="position:absolute;left:1110.8px;top:102.3px;" width="13" height="13" viewBox="0 0 13 13"><path d="M10.8 3.8 A5 5 0 1 0 10.6 9.2" fill="none" stroke="#5e0a78" stroke-width="1.8"/><path d="M12.5 0.5 V6 H7 Z" fill="#5e0a78"/></svg><svg style="position:absolute;left:1139px;top:102.0px;" width="16" height="13" viewBox="0 0 16 13"><circle cx="4.6" cy="1.6" r="1.5" fill="#5e0a78"/><rect x="2.3" y="3.6" width="4.4" height="6" rx="1.3" fill="#5e0a78"/><path d="M1.6 9.5 L2.3 5 H3 L2.6 9.5 Z" fill="#5e0a78"/><rect x="3" y="8.5" width="1.5" height="4.5" fill="#5e0a78"/><rect x="4.9" y="8.5" width="1.5" height="4.5" fill="#5e0a78"/><path d="M5.5 3.8 L10 3.4 L10 5.4 L6 6.4 Z" fill="#5e0a78"/><rect x="9" y="0.9" width="6.3" height="6.9" rx="1" fill="none" stroke="#5e0a78" stroke-width="1.5"/></svg><div style="position:absolute;left:541.25px;top:136.95px;font:400 16px/16px 'Liberation Sans', sans-serif;color:#f03cf0;white-space:pre;transform:scaleX(1.0141);transform-origin:0 0;">Solutions</div><div style="position:absolute;left:621.25px;top:136.95px;font:400 16px/16px 'Liberation Sans', sans-serif;color:#6c757d;white-space:pre;transform:scaleX(1.0224);transform-origin:0 0;">Details</div><div style="position:absolute;left:684.4px;top:136.95px;font:400 16px/16px 'Liberation Sans', sans-serif;color:#6c757d;white-space:pre;transform:scaleX(1.0613);transform-origin:0 0;">Ratification</div><div style="position:absolute;left:539px;top:169px;width:591px;height:38px;border:1px dashed #e0a6ec;border-radius:5px;background:#fff;box-sizing:border-box"></div><div style="position:absolute;left:539px;top:169px;width:69px;height:38px;border:1.5px dashed #7a2a90;border-radius:5px 0 0 5px;background:#fff;box-sizing:border-box"></div><div style="position:absolute;left:549.5px;top:180.60px;font:400 15px/15px 'Liberation Sans', sans-serif;color:#a274b8;white-space:pre;transform:scaleX(0.9889);transform-origin:0 0;">Search</div><svg style="position:absolute;left:1095px;top:179px;" width="18" height="18" viewBox="0 0 18 18"><circle cx="7" cy="7" r="5.2" fill="none" stroke="#d8d8d8" stroke-width="2.4"/><path d="M11 11 L16 16" stroke="#d8d8d8" stroke-width="2.6" stroke-linecap="round"/></svg><div style="position:absolute;left:1133px;top:169px;width:22px;height:38px;border:1.5px dashed #6a2a82;border-radius:5px;box-sizing:border-box"></div><svg style="position:absolute;left:1139.0px;top:185.5px;" width="10" height="5" viewBox="0 0 10 5"><path d="M0 0 H10 L5.0 5 Z" fill="#8a3aa8"/></svg><div style="position:absolute;left:539px;top:419px;width:611px;height:133px;background:#f2ebf3"></div><div style="position:absolute;left:542.5px;top:224.88px;font:400 15.5px/15.5px 'Liberation Sans', sans-serif;color:#2a2ab0;white-space:pre;transform:scaleX(1.0200);transform-origin:0 0;text-shadow:1px 1px 2px rgba(0,0,0,0.18);">AAAAA - Big RPG file</div><div style="position:absolute;left:542.5px;top:247.27px;font:700 13.5px/13.5px 'Liberation Sans', sans-serif;color:#6a6a6a;white-space:pre;transform:scaleX(1.0000);transform-origin:0 0;text-shadow:1px 1px 2px rgba(0,0,0,0.18);">Location:</div><div style="position:absolute;left:607.74375px;top:247.27px;font:400 13.5px/13.5px 'Liberation Sans', sans-serif;color:#8c8c8c;white-space:pre;transform:scaleX(0.9500);transform-origin:0 0;text-shadow:1px 1px 2px rgba(0,0,0,0.18);">MISDEMDEV</div><div style="position:absolute;left:542.5px;top:268.27px;font:700 13.5px/13.5px 'Liberation Sans', sans-serif;color:#6a6a6a;white-space:pre;transform:scaleX(1.0000);transform-origin:0 0;text-shadow:1px 1px 2px rgba(0,0,0,0.18);">Environment:</div><div style="position:absolute;left:634.0046875px;top:268.27px;font:400 13.5px/13.5px 'Liberation Sans', sans-serif;color:#8c8c8c;white-space:pre;transform:scaleX(0.9500);transform-origin:0 0;text-shadow:1px 1px 2px rgba(0,0,0,0.18);">*DEV</div><div style="position:absolute;left:673.3665625000001px;top:268.27px;font:700 13.5px/13.5px 'Liberation Sans', sans-serif;color:#6a6a6a;white-space:pre;transform:scaleX(1.0000);transform-origin:0 0;text-shadow:1px 1px 2px rgba(0,0,0,0.18);">Status:</div><div style="position:absolute;left:723.6196875px;top:268.27px;font:400 13.5px/13.5px 'Liberation Sans', sans-serif;color:#8c8c8c;white-space:pre;transform:scaleX(0.9500);transform-origin:0 0;text-shadow:1px 1px 2px rgba(0,0,0,0.18);">*ACT</div><div style="position:absolute;left:762.261640625px;top:268.27px;font:700 13.5px/13.5px 'Liberation Sans', sans-serif;color:#6a6a6a;white-space:pre;transform:scaleX(1.0000);transform-origin:0 0;text-shadow:1px 1px 2px rgba(0,0,0,0.18);">Type:</div><div style="position:absolute;left:801.764765625px;top:268.27px;font:400 13.5px/13.5px 'Liberation Sans', sans-serif;color:#8c8c8c;white-space:pre;transform:scaleX(0.9500);transform-origin:0 0;text-shadow:1px 1px 2px rgba(0,0,0,0.18);">*PGM .RPGLE</div><div style="position:absolute;left:539px;top:285.6px;width:611px;height:0;border-top:1px dashed #dcdcdc"></div><svg style="position:absolute;left:1108.1px;top:235.1px;" width="17.8" height="5.8" viewBox="0 0 17.8 5.8"><circle cx="2.9" cy="2.9" r="1.9" fill="#e8e8e8"/><circle cx="8.9" cy="2.9" r="1.9" fill="#e8e8e8"/><circle cx="14.9" cy="2.9" r="1.9" fill="#e8e8e8"/></svg><div style="position:absolute;left:542.5px;top:291.38px;font:400 15.5px/15.5px 'Liberation Sans', sans-serif;color:#2a2ab0;white-space:pre;transform:scaleX(1.0200);transform-origin:0 0;text-shadow:1px 1px 2px rgba(0,0,0,0.18);">AAPGM</div><div style="position:absolute;left:542.5px;top:313.77px;font:700 13.5px/13.5px 'Liberation Sans', sans-serif;color:#6a6a6a;white-space:pre;transform:scaleX(1.0000);transform-origin:0 0;text-shadow:1px 1px 2px rgba(0,0,0,0.18);">Location:</div><div style="position:absolute;left:607.74375px;top:313.77px;font:400 13.5px/13.5px 'Liberation Sans', sans-serif;color:#8c8c8c;white-space:pre;transform:scaleX(0.9500);transform-origin:0 0;text-shadow:1px 1px 2px rgba(0,0,0,0.18);">MISDEMDEV</div><div style="position:absolute;left:542.5px;top:334.77px;font:700 13.5px/13.5px 'Liberation Sans', sans-serif;color:#6a6a6a;white-space:pre;transform:scaleX(1.0000);transform-origin:0 0;text-shadow:1px 1px 2px rgba(0,0,0,0.18);">Environment:</div><div style="position:absolute;left:634.0046875px;top:334.77px;font:400 13.5px/13.5px 'Liberation Sans', sans-serif;color:#8c8c8c;white-space:pre;transform:scaleX(0.9500);transform-origin:0 0;text-shadow:1px 1px 2px rgba(0,0,0,0.18);">*DEV</div><div style="position:absolute;left:673.3665625000001px;top:334.77px;font:700 13.5px/13.5px 'Liberation Sans', sans-serif;color:#6a6a6a;white-space:pre;transform:scaleX(1.0000);transform-origin:0 0;text-shadow:1px 1px 2px rgba(0,0,0,0.18);">Status:</div><div style="position:absolute;left:723.6196875px;top:334.77px;font:400 13.5px/13.5px 'Liberation Sans', sans-serif;color:#8c8c8c;white-space:pre;transform:scaleX(0.9500);transform-origin:0 0;text-shadow:1px 1px 2px rgba(0,0,0,0.18);">*ACT</div><div style="position:absolute;left:762.261640625px;top:334.77px;font:700 13.5px/13.5px 'Liberation Sans', sans-serif;color:#6a6a6a;white-space:pre;transform:scaleX(1.0000);transform-origin:0 0;text-shadow:1px 1px 2px rgba(0,0,0,0.18);">Type:</div><div style="position:absolute;left:801.764765625px;top:334.77px;font:400 13.5px/13.5px 'Liberation Sans', sans-serif;color:#8c8c8c;white-space:pre;transform:scaleX(0.9500);transform-origin:0 0;text-shadow:1px 1px 2px rgba(0,0,0,0.18);">*PGM .RPGLE</div><div style="position:absolute;left:539px;top:352.1px;width:611px;height:0;border-top:1px dashed #dcdcdc"></div><svg style="position:absolute;left:1108.1px;top:301.6px;" width="17.8" height="5.8" viewBox="0 0 17.8 5.8"><circle cx="2.9" cy="2.9" r="1.9" fill="#e8e8e8"/><circle cx="8.9" cy="2.9" r="1.9" fill="#e8e8e8"/><circle cx="14.9" cy="2.9" r="1.9" fill="#e8e8e8"/></svg><div style="position:absolute;left:542.5px;top:357.88px;font:400 15.5px/15.5px 'Liberation Sans', sans-serif;color:#2a2ab0;white-space:pre;transform:scaleX(1.0200);transform-origin:0 0;text-shadow:1px 1px 2px rgba(0,0,0,0.18);">ADDR5</div><div style="position:absolute;left:542.5px;top:380.27px;font:700 13.5px/13.5px 'Liberation Sans', sans-serif;color:#6a6a6a;white-space:pre;transform:scaleX(1.0000);transform-origin:0 0;text-shadow:1px 1px 2px rgba(0,0,0,0.18);">Location:</div><div style="position:absolute;left:607.74375px;top:380.27px;font:400 13.5px/13.5px 'Liberation Sans', sans-serif;color:#8c8c8c;white-space:pre;transform:scaleX(0.9500);transform-origin:0 0;text-shadow:1px 1px 2px rgba(0,0,0,0.18);">MISDEMDEV</div><div style="position:absolute;left:542.5px;top:401.27px;font:700 13.5px/13.5px 'Liberation Sans', sans-serif;color:#6a6a6a;white-space:pre;transform:scaleX(1.0000);transform-origin:0 0;text-shadow:1px 1px 2px rgba(0,0,0,0.18);">Environment:</div><div style="position:absolute;left:634.0046875px;top:401.27px;font:400 13.5px/13.5px 'Liberation Sans', sans-serif;color:#8c8c8c;white-space:pre;transform:scaleX(0.9500);transform-origin:0 0;text-shadow:1px 1px 2px rgba(0,0,0,0.18);">*DEV</div><div style="position:absolute;left:673.3665625000001px;top:401.27px;font:700 13.5px/13.5px 'Liberation Sans', sans-serif;color:#6a6a6a;white-space:pre;transform:scaleX(1.0000);transform-origin:0 0;text-shadow:1px 1px 2px rgba(0,0,0,0.18);">Status:</div><div style="position:absolute;left:723.6196875px;top:401.27px;font:400 13.5px/13.5px 'Liberation Sans', sans-serif;color:#8c8c8c;white-space:pre;transform:scaleX(0.9500);transform-origin:0 0;text-shadow:1px 1px 2px rgba(0,0,0,0.18);">*ACT</div><div style="position:absolute;left:762.261640625px;top:401.27px;font:700 13.5px/13.5px 'Liberation Sans', sans-serif;color:#6a6a6a;white-space:pre;transform:scaleX(1.0000);transform-origin:0 0;text-shadow:1px 1px 2px rgba(0,0,0,0.18);">Type:</div><div style="position:absolute;left:801.764765625px;top:401.27px;font:400 13.5px/13.5px 'Liberation Sans', sans-serif;color:#8c8c8c;white-space:pre;transform:scaleX(0.9500);transform-origin:0 0;text-shadow:1px 1px 2px rgba(0,0,0,0.18);">*FILE .PF</div><div style="position:absolute;left:539px;top:418.6px;width:611px;height:0;border-top:1px dashed #dcdcdc"></div><svg style="position:absolute;left:1108.1px;top:368.1px;" width="17.8" height="5.8" viewBox="0 0 17.8 5.8"><circle cx="2.9" cy="2.9" r="1.9" fill="#e8e8e8"/><circle cx="8.9" cy="2.9" r="1.9" fill="#e8e8e8"/><circle cx="14.9" cy="2.9" r="1.9" fill="#e8e8e8"/></svg><div style="position:absolute;left:542.5px;top:424.38px;font:400 15.5px/15.5px 'Liberation Sans', sans-serif;color:#2a2ab0;white-space:pre;transform:scaleX(1.0200);transform-origin:0 0;text-shadow:1px 1px 2px rgba(0,0,0,0.18);">CTABLE</div><div style="position:absolute;left:542.5px;top:446.77px;font:700 13.5px/13.5px 'Liberation Sans', sans-serif;color:#6a6a6a;white-space:pre;transform:scaleX(1.0000);transform-origin:0 0;text-shadow:1px 1px 2px rgba(0,0,0,0.18);">Location:</div><div style="position:absolute;left:607.74375px;top:446.77px;font:400 13.5px/13.5px 'Liberation Sans', sans-serif;color:#8c8c8c;white-space:pre;transform:scaleX(0.9500);transform-origin:0 0;text-shadow:1px 1px 2px rgba(0,0,0,0.18);">MISDEMDEV</div><div style="position:absolute;left:542.5px;top:467.77px;font:700 13.5px/13.5px 'Liberation Sans', sans-serif;color:#6a6a6a;white-space:pre;transform:scaleX(1.0000);transform-origin:0 0;text-shadow:1px 1px 2px rgba(0,0,0,0.18);">Environment:</div><div style="position:absolute;left:634.0046875px;top:467.77px;font:400 13.5px/13.5px 'Liberation Sans', sans-serif;color:#8c8c8c;white-space:pre;transform:scaleX(0.9500);transform-origin:0 0;text-shadow:1px 1px 2px rgba(0,0,0,0.18);">*DEV</div><div style="position:absolute;left:673.3665625000001px;top:467.77px;font:700 13.5px/13.5px 'Liberation Sans', sans-serif;color:#6a6a6a;white-space:pre;transform:scaleX(1.0000);transform-origin:0 0;text-shadow:1px 1px 2px rgba(0,0,0,0.18);">Status:</div><div style="position:absolute;left:723.6196875px;top:467.77px;font:400 13.5px/13.5px 'Liberation Sans', sans-serif;color:#8c8c8c;white-space:pre;transform:scaleX(0.9500);transform-origin:0 0;text-shadow:1px 1px 2px rgba(0,0,0,0.18);">*ACT</div><div style="position:absolute;left:762.261640625px;top:467.77px;font:700 13.5px/13.5px 'Liberation Sans', sans-serif;color:#6a6a6a;white-space:pre;transform:scaleX(1.0000);transform-origin:0 0;text-shadow:1px 1px 2px rgba(0,0,0,0.18);">Type:</div><div style="position:absolute;left:801.764765625px;top:467.77px;font:400 13.5px/13.5px 'Liberation Sans', sans-serif;color:#8c8c8c;white-space:pre;transform:scaleX(0.9500);transform-origin:0 0;text-shadow:1px 1px 2px rgba(0,0,0,0.18);">*FILE .PF</div><div style="position:absolute;left:539px;top:485.1px;width:611px;height:0;border-top:1px dashed #dcdcdc"></div><svg style="position:absolute;left:1108.1px;top:434.6px;" width="17.8" height="5.8" viewBox="0 0 17.8 5.8"><circle cx="2.9" cy="2.9" r="1.9" fill="#555"/><circle cx="8.9" cy="2.9" r="1.9" fill="#555"/><circle cx="14.9" cy="2.9" r="1.9" fill="#555"/></svg><div style="position:absolute;left:542.5px;top:490.88px;font:400 15.5px/15.5px 'Liberation Sans', sans-serif;color:#2a2ab0;white-space:pre;transform:scaleX(1.0200);transform-origin:0 0;text-shadow:1px 1px 2px rgba(0,0,0,0.18);">ARRAY1P (QCPYLESRC) - PUT-/array</div><div style="position:absolute;left:542.5px;top:513.27px;font:700 13.5px/13.5px 'Liberation Sans', sans-serif;color:#6a6a6a;white-space:pre;transform:scaleX(1.0000);transform-origin:0 0;text-shadow:1px 1px 2px rgba(0,0,0,0.18);">Location:</div><div style="position:absolute;left:607.74375px;top:513.27px;font:400 13.5px/13.5px 'Liberation Sans', sans-serif;color:#8c8c8c;white-space:pre;transform:scaleX(0.9500);transform-origin:0 0;text-shadow:1px 1px 2px rgba(0,0,0,0.18);">IRESTLIB</div><div style="position:absolute;left:542.5px;top:534.27px;font:700 13.5px/13.5px 'Liberation Sans', sans-serif;color:#6a6a6a;white-space:pre;transform:scaleX(1.0000);transform-origin:0 0;text-shadow:1px 1px 2px rgba(0,0,0,0.18);">Environment:</div><div style="position:absolute;left:634.0046875px;top:534.27px;font:400 13.5px/13.5px 'Liberation Sans', sans-serif;color:#8c8c8c;white-space:pre;transform:scaleX(0.9500);transform-origin:0 0;text-shadow:1px 1px 2px rgba(0,0,0,0.18);">*DEV</div><div style="position:absolute;left:673.3665625000001px;top:534.27px;font:700 13.5px/13.5px 'Liberation Sans', sans-serif;color:#6a6a6a;white-space:pre;transform:scaleX(1.0000);transform-origin:0 0;text-shadow:1px 1px 2px rgba(0,0,0,0.18);">Status:</div><div style="position:absolute;left:723.6196875px;top:534.27px;font:400 13.5px/13.5px 'Liberation Sans', sans-serif;color:#8c8c8c;white-space:pre;transform:scaleX(0.9500);transform-origin:0 0;text-shadow:1px 1px 2px rgba(0,0,0,0.18);">*ACT</div><div style="position:absolute;left:762.261640625px;top:534.27px;font:700 13.5px/13.5px 'Liberation Sans', sans-serif;color:#6a6a6a;white-space:pre;transform:scaleX(1.0000);transform-origin:0 0;text-shadow:1px 1px 2px rgba(0,0,0,0.18);">Type:</div><div style="position:absolute;left:801.764765625px;top:534.27px;font:400 13.5px/13.5px 'Liberation Sans', sans-serif;color:#8c8c8c;white-space:pre;transform:scaleX(0.9500);transform-origin:0 0;text-shadow:1px 1px 2px rgba(0,0,0,0.18);">*FILE .PF</div><div style="position:absolute;left:539px;top:551.6px;width:611px;height:0;border-top:1px dashed #dcdcdc"></div><svg style="position:absolute;left:1108.1px;top:501.1px;" width="17.8" height="5.8" viewBox="0 0 17.8 5.8"><circle cx="2.9" cy="2.9" r="1.9" fill="#e8e8e8"/><circle cx="8.9" cy="2.9" r="1.9" fill="#e8e8e8"/><circle cx="14.9" cy="2.9" r="1.9" fill="#e8e8e8"/></svg><div style="position:absolute;left:776px;top:687.72px;font:400 14.5px/14.5px 'Liberation Sans', sans-serif;color:#777;white-space:pre;transform:scaleX(0.9412);transform-origin:0 0;">Total: 5</div><div style="position:absolute;left:834px;top:687.72px;font:400 14.5px/14.5px 'Liberation Sans', sans-serif;color:#777;white-space:pre;transform:scaleX(0.9193);transform-origin:0 0;">Page Size: 50</div><div style="position:absolute;left:1343px;top:44px;width:577px;height:44px;background:#f2f2f2"></div><svg style="position:absolute;left:1183.5px;top:59px;" width="12" height="12" viewBox="0 0 12 12"><path d="M0.5 1.5 H10.5 M0.5 4.5 H8 M0.5 7.5 H10.5 M0.5 10.5 H7" stroke="#a8a8a8" stroke-width="1.2"/></svg><div style="position:absolute;left:1203px;top:58.68px;font:400 15.5px/15.5px 'Liberation Sans', sans-serif;color:#333;white-space:pre;transform:scaleX(0.8703);transform-origin:0 0;">QCPYLESRC.PF</div><svg style="position:absolute;left:1318px;top:60px;" width="14" height="13" viewBox="0 0 14 13"><path d="M1.5 1 L12.5 12 M12.5 1 L1.5 12" stroke="#3a3a3a" stroke-width="1.3"/></svg><svg style="position:absolute;left:1851px;top:57px;" width="16" height="17" viewBox="0 0 16 17"><rect x="1" y="1.5" width="14" height="14" rx="1.5" fill="none" stroke="#3a3a3a" stroke-width="1.3"/><path d="M8 1.5 V15.5" stroke="#3a3a3a" stroke-width="1.3"/></svg><svg style="position:absolute;left:1882.4px;top:63.400000000000006px;" width="17.2" height="5.2" viewBox="0 0 17.2 5.2"><circle cx="2.6" cy="2.6" r="1.6" fill="#3a3a3a"/><circle cx="8.6" cy="2.6" r="1.6" fill="#3a3a3a"/><circle cx="14.6" cy="2.6" r="1.6" fill="#3a3a3a"/></svg><svg style="position:absolute;left:1191px;top:96px;" width="12" height="12" viewBox="0 0 12 12"><path d="M0.5 1.5 H10.5 M0.5 4.5 H8 M0.5 7.5 H10.5 M0.5 10.5 H7" stroke="#b0b0b0" stroke-width="1.2"/></svg><div style="position:absolute;left:1210.4px;top:94.48px;font:400 15.5px/15.5px 'Liberation Sans', sans-serif;color:#777;white-space:pre;transform:scaleX(0.8711);transform-origin:0 0;">QCPYLESRC.PF</div><div style="position:absolute;left:1248.5px;top:417.46999999999997px;width:671.5px;height:23.77px;background:#e6f4d7"></div><div style="position:absolute;left:1248.5px;top:139px;width:1px;height:601px;background:#dcdcdc"></div><div style="position:absolute;left:1267.7px;top:139px;width:1px;height:601px;background:#dcdcdc"></div><div style="position:absolute;left:1286.9px;top:139px;width:1px;height:601px;background:#dcdcdc"></div><div style="position:absolute;left:1306.1px;top:139px;width:1px;height:601px;background:#dcdcdc"></div><div style="position:absolute;left:1325.3px;top:322.39px;width:1px;height:166.39px;background:#8c8c8c"></div><div style="position:absolute;left:1344.5px;top:346.15999999999997px;width:1px;height:23.77px;background:#dcdcdc"></div><div style="position:absolute;left:1325.3px;top:631.4px;width:1px;height:108.60000000000002px;background:#dcdcdc"></div><div style="position:absolute;left:1344.5px;top:655.1700000000001px;width:1px;height:47.54px;background:#dcdcdc"></div><div style="position:absolute;left:1195.80px;top:136.21px;font:400 17px/17px 'Liberation Mono',monospace;white-space:pre;transform:scaleX(0.9412);transform-origin:0 0;color:#6e6e6e">35</div><div style="position:absolute;left:1315.70px;top:136.21px;font:400 17px/17px 'Liberation Mono',monospace;white-space:pre;transform:scaleX(0.9412);transform-origin:0 0;color:#262626"><span style="color:#262626">//</span></div><div style="position:absolute;left:1195.80px;top:159.98px;font:400 17px/17px 'Liberation Mono',monospace;white-space:pre;transform:scaleX(0.9412);transform-origin:0 0;color:#6e6e6e">36</div><div style="position:absolute;left:1315.70px;top:159.98px;font:400 17px/17px 'Liberation Mono',monospace;white-space:pre;transform:scaleX(0.9412);transform-origin:0 0;color:#262626"><span style="color:#262626">// This procedure is used to validate the</span></div><div style="position:absolute;left:1195.80px;top:183.75px;font:400 17px/17px 'Liberation Mono',monospace;white-space:pre;transform:scaleX(0.9412);transform-origin:0 0;color:#6e6e6e">37</div><div style="position:absolute;left:1315.70px;top:183.75px;font:400 17px/17px 'Liberation Mono',monospace;white-space:pre;transform:scaleX(0.9412);transform-origin:0 0;color:#262626"><span style="color:#262626">// request input through the business logic</span></div><div style="position:absolute;left:1195.80px;top:207.52px;font:400 17px/17px 'Liberation Mono',monospace;white-space:pre;transform:scaleX(0.9412);transform-origin:0 0;color:#6e6e6e">38</div><div style="position:absolute;left:1315.70px;top:207.52px;font:400 17px/17px 'Liberation Mono',monospace;white-space:pre;transform:scaleX(0.9412);transform-origin:0 0;color:#262626"><span style="color:#262626">// and reset the response code accordingly.</span></div><div style="position:absolute;left:1195.80px;top:231.29px;font:400 17px/17px 'Liberation Mono',monospace;white-space:pre;transform:scaleX(0.9412);transform-origin:0 0;color:#6e6e6e">39</div><div style="position:absolute;left:1315.70px;top:231.29px;font:400 17px/17px 'Liberation Mono',monospace;white-space:pre;transform:scaleX(0.9412);transform-origin:0 0;color:#262626"><span style="color:#262626">// To get the possible response codes please look at the top co</span></div><div style="position:absolute;left:1195.80px;top:255.06px;font:400 17px/17px 'Liberation Mono',monospace;white-space:pre;transform:scaleX(0.9412);transform-origin:0 0;color:#6e6e6e">40</div><div style="position:absolute;left:1315.70px;top:255.06px;font:400 17px/17px 'Liberation Mono',monospace;white-space:pre;transform:scaleX(0.9412);transform-origin:0 0;color:#262626"><span style="color:#262626">//</span></div><div style="position:absolute;left:1195.80px;top:278.83px;font:400 17px/17px 'Liberation Mono',monospace;white-space:pre;transform:scaleX(0.9412);transform-origin:0 0;color:#6e6e6e">41</div><div style="position:absolute;left:1195.80px;top:302.60px;font:400 17px/17px 'Liberation Mono',monospace;white-space:pre;transform:scaleX(0.9412);transform-origin:0 0;color:#6e6e6e">42</div><div style="position:absolute;left:1315.70px;top:302.60px;font:400 17px/17px 'Liberation Mono',monospace;white-space:pre;transform:scaleX(0.9412);transform-origin:0 0;color:#262626"><span style="color:#262626">dcl-proc checkRequest;</span></div><div style="position:absolute;left:1195.80px;top:326.37px;font:400 17px/17px 'Liberation Mono',monospace;white-space:pre;transform:scaleX(0.9412);transform-origin:0 0;color:#6e6e6e">43</div><div style="position:absolute;left:1334.90px;top:326.37px;font:400 17px/17px 'Liberation Mono',monospace;white-space:pre;transform:scaleX(0.9412);transform-origin:0 0;color:#262626"><span style="color:#262626">dcl-pi checkRequest char</span><span style="color:#3b3bef">(</span><span style="color:#a0591f">3</span><span style="color:#3b3bef">)</span><span style="color:#262626">;</span></div><div style="position:absolute;left:1195.80px;top:350.14px;font:400 17px/17px 'Liberation Mono',monospace;white-space:pre;transform:scaleX(0.9412);transform-origin:0 0;color:#6e6e6e">44</div><div style="position:absolute;left:1354.10px;top:350.14px;font:400 17px/17px 'Liberation Mono',monospace;white-space:pre;transform:scaleX(0.9412);transform-origin:0 0;color:#262626"><span style="color:#262626">pRequest likeds</span><span style="color:#3b3bef">(</span><span style="color:#262626">rqs_Customer</span><span style="color:#3b3bef">)</span><span style="color:#262626">;</span></div><div style="position:absolute;left:1195.80px;top:373.91px;font:400 17px/17px 'Liberation Mono',monospace;white-space:pre;transform:scaleX(0.9412);transform-origin:0 0;color:#6e6e6e">45</div><div style="position:absolute;left:1334.90px;top:373.91px;font:400 17px/17px 'Liberation Mono',monospace;white-space:pre;transform:scaleX(0.9412);transform-origin:0 0;color:#262626"><span style="color:#262626">end-pi;</span></div><div style="position:absolute;left:1195.80px;top:397.68px;font:400 17px/17px 'Liberation Mono',monospace;white-space:pre;transform:scaleX(0.9412);transform-origin:0 0;color:#6e6e6e">46</div><div style="position:absolute;left:1195.80px;top:421.45px;font:400 17px/17px 'Liberation Mono',monospace;white-space:pre;transform:scaleX(0.9412);transform-origin:0 0;color:#9a6bd8">47</div><div style="position:absolute;left:1334.90px;top:421.45px;font:400 17px/17px 'Liberation Mono',monospace;white-space:pre;transform:scaleX(0.9412);transform-origin:0 0;color:#262626"><span style="color:#262626">dcl-s respCode CHAR</span><span style="color:#3b3bef">(</span><span style="color:#a0591f">3</span><span style="color:#3b3bef">)</span><span style="color:#262626"> INZ</span><span style="color:#3b3bef">(</span><span style="color:#4e8c32">&#x27;200&#x27;</span><span style="color:#3b3bef">)</span><span style="color:#262626">;</span></div><div style="position:absolute;left:1195.80px;top:445.22px;font:400 17px/17px 'Liberation Mono',monospace;white-space:pre;transform:scaleX(0.9412);transform-origin:0 0;color:#6e6e6e">48</div><div style="position:absolute;left:1195.80px;top:468.99px;font:400 17px/17px 'Liberation Mono',monospace;white-space:pre;transform:scaleX(0.9412);transform-origin:0 0;color:#6e6e6e">49</div><div style="position:absolute;left:1334.90px;top:468.99px;font:400 17px/17px 'Liberation Mono',monospace;white-space:pre;transform:scaleX(0.9412);transform-origin:0 0;color:#262626"><span style="color:#262626">return respCode;</span></div><div style="position:absolute;left:1195.80px;top:492.76px;font:400 17px/17px 'Liberation Mono',monospace;white-space:pre;transform:scaleX(0.9412);transform-origin:0 0;color:#6e6e6e">50</div><div style="position:absolute;left:1315.70px;top:492.76px;font:400 17px/17px 'Liberation Mono',monospace;white-space:pre;transform:scaleX(0.9412);transform-origin:0 0;color:#262626"><span style="color:#262626">end-proc;</span></div><div style="position:absolute;left:1195.80px;top:516.53px;font:400 17px/17px 'Liberation Mono',monospace;white-space:pre;transform:scaleX(0.9412);transform-origin:0 0;color:#6e6e6e">51</div><div style="position:absolute;left:1195.80px;top:540.30px;font:400 17px/17px 'Liberation Mono',monospace;white-space:pre;transform:scaleX(0.9412);transform-origin:0 0;color:#6e6e6e">52</div><div style="position:absolute;left:1315.70px;top:540.30px;font:400 17px/17px 'Liberation Mono',monospace;white-space:pre;transform:scaleX(0.9412);transform-origin:0 0;color:#262626"><span style="color:#262626">///</span></div><div style="position:absolute;left:1195.80px;top:564.07px;font:400 17px/17px 'Liberation Mono',monospace;white-space:pre;transform:scaleX(0.9412);transform-origin:0 0;color:#6e6e6e">53</div><div style="position:absolute;left:1315.70px;top:564.07px;font:400 17px/17px 'Liberation Mono',monospace;white-space:pre;transform:scaleX(0.9412);transform-origin:0 0;color:#262626"><span style="color:#262626">// OK</span></div><div style="position:absolute;left:1195.80px;top:587.84px;font:400 17px/17px 'Liberation Mono',monospace;white-space:pre;transform:scaleX(0.9412);transform-origin:0 0;color:#6e6e6e">54</div><div style="position:absolute;left:1315.70px;top:587.84px;font:400 17px/17px 'Liberation Mono',monospace;white-space:pre;transform:scaleX(0.9412);transform-origin:0 0;color:#262626"><span style="color:#262626">///</span></div><div style="position:absolute;left:1195.80px;top:611.61px;font:400 17px/17px 'Liberation Mono',monospace;white-space:pre;transform:scaleX(0.9412);transform-origin:0 0;color:#6e6e6e">55</div><div style="position:absolute;left:1315.70px;top:611.61px;font:400 17px/17px 'Liberation Mono',monospace;white-space:pre;transform:scaleX(0.9412);transform-origin:0 0;color:#262626"><span style="color:#262626">dcl-proc processResp_PutStuff_200 export;</span></div><div style="position:absolute;left:1195.80px;top:635.38px;font:400 17px/17px 'Liberation Mono',monospace;white-space:pre;transform:scaleX(0.9412);transform-origin:0 0;color:#6e6e6e">56</div><div style="position:absolute;left:1334.90px;top:635.38px;font:400 17px/17px 'Liberation Mono',monospace;white-space:pre;transform:scaleX(0.9412);transform-origin:0 0;color:#262626"><span style="color:#262626">dcl-pi  processResp_PutStuff_200;</span></div><div style="position:absolute;left:1195.80px;top:659.15px;font:400 17px/17px 'Liberation Mono',monospace;white-space:pre;transform:scaleX(0.9412);transform-origin:0 0;color:#6e6e6e">57</div><div style="position:absolute;left:1354.10px;top:659.15px;font:400 17px/17px 'Liberation Mono',monospace;white-space:pre;transform:scaleX(0.9412);transform-origin:0 0;color:#262626"><span style="color:#262626">pRequest  likeds</span><span style="color:#3b3bef">(</span><span style="color:#262626">rqs_customer</span><span style="color:#3b3bef">)</span><span style="color:#262626">;</span></div><div style="position:absolute;left:1195.80px;top:682.92px;font:400 17px/17px 'Liberation Mono',monospace;white-space:pre;transform:scaleX(0.9412);transform-origin:0 0;color:#6e6e6e">58</div><div style="position:absolute;left:1354.10px;top:682.92px;font:400 17px/17px 'Liberation Mono',monospace;white-space:pre;transform:scaleX(0.9412);transform-origin:0 0;color:#262626"><span style="color:#262626">pResponse  likeds</span><span style="color:#3b3bef">(</span><span style="color:#262626">rsp_customer</span><span style="color:#3b3bef">)</span><span style="color:#262626">;</span></div><div style="position:absolute;left:1195.80px;top:706.69px;font:400 17px/17px 'Liberation Mono',monospace;white-space:pre;transform:scaleX(0.9412);transform-origin:0 0;color:#6e6e6e">59</div><div style="position:absolute;left:1334.90px;top:706.69px;font:400 17px/17px 'Liberation Mono',monospace;white-space:pre;transform:scaleX(0.9412);transform-origin:0 0;color:#262626"><span style="color:#262626">end-pi;</span></div><div style="position:absolute;left:1195.80px;top:730.46px;font:400 17px/17px 'Liberation Mono',monospace;white-space:pre;transform:scaleX(0.9412);transform-origin:0 0;color:#6e6e6e">60</div><div style="position:absolute;left:1660.3px;top:419.46999999999997px;width:2px;height:19.77px;background:#222"></div><div style="position:absolute;left:1163px;top:115px;width:740px;height:24px;background:#f5f5f5;box-shadow:0 3px 3px -1px rgba(0,0,0,0.12)"></div><div style="position:absolute;left:1196px;top:119.68px;font:400 17px/17px 'Liberation Mono',monospace;white-space:pre;transform:scaleX(0.9412);transform-origin:0 0;color:#6e6e6e">12</div><div style="position:absolute;left:1306.10px;top:119.68px;font:400 17px/17px 'Liberation Mono',monospace;white-space:pre;transform:scaleX(0.9412);transform-origin:0 0;color:#262626">// ------------------------------------------------</div><div style="position:absolute;left:1903px;top:117px;width:1px;height:623px;background:#e0e0e0"></div><div style="position:absolute;left:1903px;top:409px;width:17px;height:2px;background:#8a8a8a"></div><div style="position:absolute;left:531px;top:740px;width:1389px;height:1px;background:#c8c8c8"></div><div style="position:absolute;left:531px;top:741px;width:1389px;height:43px;background:#f5f5f5"></div><div style="position:absolute;left:531px;top:784px;width:1389px;height:329px;background:#f8f8f8"></div><div style="position:absolute;left:531px;top:784px;width:1389px;height:38px;background:#fffcfe;border-bottom:1px solid #f1f0d8;box-sizing:border-box"></div><div style="position:absolute;left:556.6px;top:756.55px;font:400 14px/14px 'Liberation Sans', sans-serif;color:#616161;white-space:pre;transform:scaleX(0.8535);transform-origin:0 0;">PROBLEMS</div><div style="position:absolute;left:654px;top:756.55px;font:400 14px/14px 'Liberation Sans', sans-serif;color:#616161;white-space:pre;transform:scaleX(0.8740);transform-origin:0 0;">OUTPUT</div><div style="position:absolute;left:735.2px;top:756.55px;font:400 14px/14px 'Liberation Sans', sans-serif;color:#616161;white-space:pre;transform:scaleX(0.8720);transform-origin:0 0;">DEBUG CONSOLE</div><div style="position:absolute;left:872px;top:756.55px;font:400 14px/14px 'Liberation Sans', sans-serif;color:#616161;white-space:pre;transform:scaleX(0.8957);transform-origin:0 0;">TERMINAL</div><div style="position:absolute;left:966.4px;top:756.55px;font:400 14px/14px 'Liberation Sans', sans-serif;color:#616161;white-space:pre;transform:scaleX(0.8213);transform-origin:0 0;">PORTS</div><div style="position:absolute;left:1036px;top:756.55px;font:400 14px/14px 'Liberation Sans', sans-serif;color:#616161;white-space:pre;transform:scaleX(0.8798);transform-origin:0 0;">BUILD QUEUE</div><div style="position:absolute;left:1149.8px;top:756.55px;font:400 14px/14px 'Liberation Sans', sans-serif;color:#616161;white-space:pre;transform:scaleX(0.8929);transform-origin:0 0;">CONNECTION LIST</div><div style="position:absolute;left:1294.7px;top:756.55px;font:400 14px/14px 'Liberation Sans', sans-serif;color:#333;white-space:pre;transform:scaleX(0.8980);transform-origin:0 0;">COMPONENTS</div><div style="position:absolute;left:1415px;top:756.55px;font:400 14px/14px 'Liberation Sans', sans-serif;color:#616161;white-space:pre;transform:scaleX(0.8537);transform-origin:0 0;">SPOOL FILE</div><div style="position:absolute;left:1292px;top:778px;width:95px;height:1px;background:#424242"></div><svg style="position:absolute;left:1883px;top:755px;" width="15" height="15" viewBox="0 0 15 15"><path d="M1.5 1.5 L13.5 13.5 M13.5 1.5 L1.5 13.5" stroke="#3a3a3a" stroke-width="1.3"/></svg><div style="position:absolute;left:1719.5px;top:796.60px;font:400 15px/15px 'Liberation Sans', sans-serif;color:#9b5fb5;white-space:pre;transform:scaleX(0.9075);transform-origin:0 0;">V160TST</div><svg style="position:absolute;left:1782.5px;top:801px;" width="8" height="4.5" viewBox="0 0 8 4.5"><path d="M0 0 H8 L4.0 4.5 Z" fill="#9b5fb5"/></svg><svg style="position:absolute;left:1811.5px;top:798.8px;" width="13" height="13" viewBox="0 0 13 13"><path d="M10.8 3.8 A5 5 0 1 0 10.6 9.2" fill="none" stroke="#5e0a78" stroke-width="1.8"/><path d="M12.5 0.5 V6 H7 Z" fill="#5e0a78"/></svg><svg style="position:absolute;left:1839px;top:798.8px;" width="14" height="13" viewBox="0 0 14 13"><path d="M0.5 5 H5 V2 L10 6.5 L5 11 V8 H0.5 Z" fill="#5e0a78"/><path d="M8.5 1.2 H11.2 Q12.6 1.2 12.6 2.6 V10.4 Q12.6 11.8 11.2 11.8 H8.5" fill="none" stroke="#5e0a78" stroke-width="1.6"/></svg><svg style="position:absolute;left:1867.6000000000001px;top:798.9px;" width="12.2" height="12.2" viewBox="0 0 12.2 12.2"><path d="M7.88 11.93 L4.32 11.93 L4.74 10.53 L2.94 9.49 L1.94 10.56 L0.16 7.47 L1.58 7.14 L1.58 5.06 L0.16 4.73 L1.94 1.64 L2.94 2.71 L4.74 1.67 L4.32 0.27 L7.88 0.27 L7.46 1.67 L9.26 2.71 L10.26 1.64 L12.04 4.73 L10.62 5.06 L10.62 7.14 L12.04 7.47 L10.26 10.56 L9.26 9.49 L7.46 10.53 Z" fill="#5e0a78" stroke="#5e0a78" stroke-width="0.8" stroke-linejoin="round"/><circle cx="6.1" cy="6.1" r="1.95" fill="#fffcfe"/></svg><svg style="position:absolute;left:1896px;top:798.5px;" width="16" height="13" viewBox="0 0 16 13"><circle cx="4.6" cy="1.6" r="1.5" fill="#5e0a78"/><rect x="2.3" y="3.6" width="4.4" height="6" rx="1.3" fill="#5e0a78"/><path d="M1.6 9.5 L2.3 5 H3 L2.6 9.5 Z" fill="#5e0a78"/><rect x="3" y="8.5" width="1.5" height="4.5" fill="#5e0a78"/><rect x="4.9" y="8.5" width="1.5" height="4.5" fill="#5e0a78"/><path d="M5.5 3.8 L10 3.4 L10 5.4 L6 6.4 Z" fill="#5e0a78"/><rect x="9" y="0.9" width="6.3" height="6.9" rx="1" fill="none" stroke="#5e0a78" stroke-width="1.5"/></svg><div style="position:absolute;left:539px;top:828px;width:1347px;height:39px;border:1px dashed #e0a6ec;border-radius:5px;background:#fff;box-sizing:border-box"></div><div style="position:absolute;left:539px;top:828px;width:69px;height:39px;border:1.5px dashed #7a2a90;border-radius:5px 0 0 5px;background:#fff;box-sizing:border-box"></div><div style="position:absolute;left:549.5px;top:840.10px;font:400 15px/15px 'Liberation Sans', sans-serif;color:#a274b8;white-space:pre;transform:scaleX(0.9889);transform-origin:0 0;">Search</div><svg style="position:absolute;left:1852px;top:838px;" width="18" height="18" viewBox="0 0 18 18"><circle cx="7" cy="7" r="5.2" fill="none" stroke="#d8d8d8" stroke-width="2.4"/><path d="M11 11 L16 16" stroke="#d8d8d8" stroke-width="2.6" stroke-linecap="round"/></svg><div style="position:absolute;left:1889px;top:828px;width:23px;height:39px;border:1.5px dashed #6a2a82;border-radius:5px;box-sizing:border-box"></div><svg style="position:absolute;left:1895.5px;top:845.0px;" width="10" height="5" viewBox="0 0 10 5"><path d="M0 0 H10 L5.0 5 Z" fill="#8a3aa8"/></svg><div style="position:absolute;left:539px;top:964.5px;width:1372px;height:45.5px;background:#f2ebf3"></div><div style="position:absolute;left:542.5px;top:878.18px;font:400 15.5px/15.5px 'Liberation Sans', sans-serif;color:#2a2ab0;white-space:pre;transform:scaleX(1.0200);transform-origin:0 0;text-shadow:1px 1px 2px rgba(0,0,0,0.18);">#DESC - Description</div><div style="position:absolute;left:542.5px;top:900.57px;font:700 13.5px/13.5px 'Liberation Sans', sans-serif;color:#6a6a6a;white-space:pre;transform:scaleX(1.0000);transform-origin:0 0;text-shadow:1px 1px 2px rgba(0,0,0,0.18);">Location:</div><div style="position:absolute;left:607.74375px;top:900.57px;font:400 13.5px/13.5px 'Liberation Sans', sans-serif;color:#8c8c8c;white-space:pre;transform:scaleX(0.9800);transform-origin:0 0;text-shadow:1px 1px 2px rgba(0,0,0,0.18);">/QSYS.LIB/MISDEMPRD.LIB/ITEMS.FILE/</div><div style="position:absolute;left:867.16734375px;top:900.57px;font:700 13.5px/13.5px 'Liberation Sans', sans-serif;color:#6a6a6a;white-space:pre;transform:scaleX(1.0000);transform-origin:0 0;text-shadow:1px 1px 2px rgba(0,0,0,0.18);">Type:</div><div style="position:absolute;left:906.6704687499999px;top:900.57px;font:400 13.5px/13.5px 'Liberation Sans', sans-serif;color:#8c8c8c;white-space:pre;transform:scaleX(0.9500);transform-origin:0 0;text-shadow:1px 1px 2px rgba(0,0,0,0.18);">*FLD</div><div style="position:absolute;left:943.8903906249999px;top:900.57px;font:700 13.5px/13.5px 'Liberation Sans', sans-serif;color:#6a6a6a;white-space:pre;transform:scaleX(1.0000);transform-origin:0 0;text-shadow:1px 1px 2px rgba(0,0,0,0.18);">Attr:</div><div style="position:absolute;left:976.8794531249999px;top:900.57px;font:400 13.5px/13.5px 'Liberation Sans', sans-serif;color:#8c8c8c;white-space:pre;transform:scaleX(0.9500);transform-origin:0 0;text-shadow:1px 1px 2px rgba(0,0,0,0.18);">A30</div><div style="position:absolute;left:1007.6987499999999px;top:900.57px;font:700 13.5px/13.5px 'Liberation Sans', sans-serif;color:#6a6a6a;white-space:pre;transform:scaleX(1.0000);transform-origin:0 0;text-shadow:1px 1px 2px rgba(0,0,0,0.18);">App:</div><div style="position:absolute;left:1042.9378124999998px;top:900.57px;font:400 13.5px/13.5px 'Liberation Sans', sans-serif;color:#8c8c8c;white-space:pre;transform:scaleX(0.9500);transform-origin:0 0;text-shadow:1px 1px 2px rgba(0,0,0,0.18);">MISHD</div><div style="position:absolute;left:1092.2628124999999px;top:900.57px;font:700 13.5px/13.5px 'Liberation Sans', sans-serif;color:#6a6a6a;white-space:pre;transform:scaleX(1.0000);transform-origin:0 0;text-shadow:1px 1px 2px rgba(0,0,0,0.18);">Env:</div><div style="position:absolute;left:1126.0175px;top:900.57px;font:400 13.5px/13.5px 'Liberation Sans', sans-serif;color:#8c8c8c;white-space:pre;transform:scaleX(0.9500);transform-origin:0 0;text-shadow:1px 1px 2px rgba(0,0,0,0.18);">*PRD</div><div style="position:absolute;left:539px;top:918.0px;width:1372px;height:0;border-top:1px dashed #dcdcdc"></div><svg style="position:absolute;left:1871.1px;top:889.4px;" width="17.8" height="5.8" viewBox="0 0 17.8 5.8"><circle cx="2.9" cy="2.9" r="1.9" fill="#e8e8e8"/><circle cx="8.9" cy="2.9" r="1.9" fill="#e8e8e8"/><circle cx="14.9" cy="2.9" r="1.9" fill="#e8e8e8"/></svg><div style="position:absolute;left:542.5px;top:924.18px;font:400 15.5px/15.5px 'Liberation Sans', sans-serif;color:#2a2ab0;white-space:pre;transform:scaleX(1.0200);transform-origin:0 0;text-shadow:1px 1px 2px rgba(0,0,0,0.18);">#DESC - Description</div><div style="position:absolute;left:542.5px;top:946.57px;font:700 13.5px/13.5px 'Liberation Sans', sans-serif;color:#6a6a6a;white-space:pre;transform:scaleX(1.0000);transform-origin:0 0;text-shadow:1px 1px 2px rgba(0,0,0,0.18);">Location:</div><div style="position:absolute;left:607.74375px;top:946.57px;font:400 13.5px/13.5px 'Liberation Sans', sans-serif;color:#8c8c8c;white-space:pre;transform:scaleX(0.9800);transform-origin:0 0;text-shadow:1px 1px 2px rgba(0,0,0,0.18);">/QSYS.LIB/MISDEMPRD.LIB/ITEMSL1.FILE/</div><div style="position:absolute;left:881.88265625px;top:946.57px;font:700 13.5px/13.5px 'Liberation Sans', sans-serif;color:#6a6a6a;white-space:pre;transform:scaleX(1.0000);transform-origin:0 0;text-shadow:1px 1px 2px rgba(0,0,0,0.18);">Type:</div><div style="position:absolute;left:921.3857812499999px;top:946.57px;font:400 13.5px/13.5px 'Liberation Sans', sans-serif;color:#8c8c8c;white-space:pre;transform:scaleX(0.9500);transform-origin:0 0;text-shadow:1px 1px 2px rgba(0,0,0,0.18);">*FLD</div><div style="position:absolute;left:958.6057031249999px;top:946.57px;font:700 13.5px/13.5px 'Liberation Sans', sans-serif;color:#6a6a6a;white-space:pre;transform:scaleX(1.0000);transform-origin:0 0;text-shadow:1px 1px 2px rgba(0,0,0,0.18);">Attr:</div><div style="position:absolute;left:991.5947656249999px;top:946.57px;font:400 13.5px/13.5px 'Liberation Sans', sans-serif;color:#8c8c8c;white-space:pre;transform:scaleX(0.9500);transform-origin:0 0;text-shadow:1px 1px 2px rgba(0,0,0,0.18);">A30</div><div style="position:absolute;left:1022.4140624999999px;top:946.57px;font:700 13.5px/13.5px 'Liberation Sans', sans-serif;color:#6a6a6a;white-space:pre;transform:scaleX(1.0000);transform-origin:0 0;text-shadow:1px 1px 2px rgba(0,0,0,0.18);">App:</div><div style="position:absolute;left:1057.6531249999998px;top:946.57px;font:400 13.5px/13.5px 'Liberation Sans', sans-serif;color:#8c8c8c;white-space:pre;transform:scaleX(0.9500);transform-origin:0 0;text-shadow:1px 1px 2px rgba(0,0,0,0.18);">MISHD</div><div style="position:absolute;left:1106.9781249999999px;top:946.57px;font:700 13.5px/13.5px 'Liberation Sans', sans-serif;color:#6a6a6a;white-space:pre;transform:scaleX(1.0000);transform-origin:0 0;text-shadow:1px 1px 2px rgba(0,0,0,0.18);">Env:</div><div style="position:absolute;left:1140.7328125px;top:946.57px;font:400 13.5px/13.5px 'Liberation Sans', sans-serif;color:#8c8c8c;white-space:pre;transform:scaleX(0.9500);transform-origin:0 0;text-shadow:1px 1px 2px rgba(0,0,0,0.18);">*PRD</div><div style="position:absolute;left:539px;top:964.0px;width:1372px;height:0;border-top:1px dashed #dcdcdc"></div><svg style="position:absolute;left:1871.1px;top:935.4px;" width="17.8" height="5.8" viewBox="0 0 17.8 5.8"><circle cx="2.9" cy="2.9" r="1.9" fill="#e8e8e8"/><circle cx="8.9" cy="2.9" r="1.9" fill="#e8e8e8"/><circle cx="14.9" cy="2.9" r="1.9" fill="#e8e8e8"/></svg><div style="position:absolute;left:542.5px;top:970.18px;font:400 15.5px/15.5px 'Liberation Sans', sans-serif;color:#2a2ab0;white-space:pre;transform:scaleX(1.0200);transform-origin:0 0;text-shadow:1px 1px 2px rgba(0,0,0,0.18);">#ITEM - Item #</div><div style="position:absolute;left:542.5px;top:992.57px;font:700 13.5px/13.5px 'Liberation Sans', sans-serif;color:#6a6a6a;white-space:pre;transform:scaleX(1.0000);transform-origin:0 0;text-shadow:1px 1px 2px rgba(0,0,0,0.18);">Location:</div><div style="position:absolute;left:607.74375px;top:992.57px;font:400 13.5px/13.5px 'Liberation Sans', sans-serif;color:#8c8c8c;white-space:pre;transform:scaleX(0.9800);transform-origin:0 0;text-shadow:1px 1px 2px rgba(0,0,0,0.18);">/QSYS.LIB/MISDEMPRD.LIB/ITEMS.FILE/</div><div style="position:absolute;left:867.16734375px;top:992.57px;font:700 13.5px/13.5px 'Liberation Sans', sans-serif;color:#6a6a6a;white-space:pre;transform:scaleX(1.0000);transform-origin:0 0;text-shadow:1px 1px 2px rgba(0,0,0,0.18);">Type:</div><div style="position:absolute;left:906.6704687499999px;top:992.57px;font:400 13.5px/13.5px 'Liberation Sans', sans-serif;color:#8c8c8c;white-space:pre;transform:scaleX(0.9500);transform-origin:0 0;text-shadow:1px 1px 2px rgba(0,0,0,0.18);">*FLD</div><div style="position:absolute;left:943.8903906249999px;top:992.57px;font:700 13.5px/13.5px 'Liberation Sans', sans-serif;color:#6a6a6a;white-space:pre;transform:scaleX(1.0000);transform-origin:0 0;text-shadow:1px 1px 2px rgba(0,0,0,0.18);">Attr:</div><div style="position:absolute;left:976.8794531249999px;top:992.57px;font:400 13.5px/13.5px 'Liberation Sans', sans-serif;color:#8c8c8c;white-space:pre;transform:scaleX(0.9500);transform-origin:0 0;text-shadow:1px 1px 2px rgba(0,0,0,0.18);">A10</div><div style="position:absolute;left:1007.6987499999999px;top:992.57px;font:700 13.5px/13.5px 'Liberation Sans', sans-serif;color:#6a6a6a;white-space:pre;transform:scaleX(1.0000);transform-origin:0 0;text-shadow:1px 1px 2px rgba(0,0,0,0.18);">App:</div><div style="position:absolute;left:1042.9378124999998px;top:992.57px;font:400 13.5px/13.5px 'Liberation Sans', sans-serif;color:#8c8c8c;white-space:pre;transform:scaleX(0.9500);transform-origin:0 0;text-shadow:1px 1px 2px rgba(0,0,0,0.18);">MISHD</div><div style="position:absolute;left:1092.2628124999999px;top:992.57px;font:700 13.5px/13.5px 'Liberation Sans', sans-serif;color:#6a6a6a;white-space:pre;transform:scaleX(1.0000);transform-origin:0 0;text-shadow:1px 1px 2px rgba(0,0,0,0.18);">Env:</div><div style="position:absolute;left:1126.0175px;top:992.57px;font:400 13.5px/13.5px 'Liberation Sans', sans-serif;color:#8c8c8c;white-space:pre;transform:scaleX(0.9500);transform-origin:0 0;text-shadow:1px 1px 2px rgba(0,0,0,0.18);">*PRD</div><div style="position:absolute;left:539px;top:1010.0px;width:1372px;height:0;border-top:1px dashed #dcdcdc"></div><svg style="position:absolute;left:1871.1px;top:981.4px;" width="17.8" height="5.8" viewBox="0 0 17.8 5.8"><circle cx="2.9" cy="2.9" r="1.9" fill="#e8e8e8"/><circle cx="8.9" cy="2.9" r="1.9" fill="#e8e8e8"/><circle cx="14.9" cy="2.9" r="1.9" fill="#e8e8e8"/></svg><div style="position:absolute;left:542.5px;top:1016.18px;font:400 15.5px/15.5px 'Liberation Sans', sans-serif;color:#2a2ab0;white-space:pre;transform:scaleX(1.0200);transform-origin:0 0;text-shadow:1px 1px 2px rgba(0,0,0,0.18);">#ITEM - Item #</div><div style="position:absolute;left:542.5px;top:1038.57px;font:700 13.5px/13.5px 'Liberation Sans', sans-serif;color:#6a6a6a;white-space:pre;transform:scaleX(1.0000);transform-origin:0 0;text-shadow:1px 1px 2px rgba(0,0,0,0.18);">Location:</div><div style="position:absolute;left:607.74375px;top:1038.57px;font:400 13.5px/13.5px 'Liberation Sans', sans-serif;color:#8c8c8c;white-space:pre;transform:scaleX(0.9800);transform-origin:0 0;text-shadow:1px 1px 2px rgba(0,0,0,0.18);">/QSYS.LIB/MISDEMPRD.LIB/ITEMSL1.FILE/</div><div style="position:absolute;left:881.88265625px;top:1038.57px;font:700 13.5px/13.5px 'Liberation Sans', sans-serif;color:#6a6a6a;white-space:pre;transform:scaleX(1.0000);transform-origin:0 0;text-shadow:1px 1px 2px rgba(0,0,0,0.18);">Type:</div><div style="position:absolute;left:921.3857812499999px;top:1038.57px;font:400 13.5px/13.5px 'Liberation Sans', sans-serif;color:#8c8c8c;white-space:pre;transform:scaleX(0.9500);transform-origin:0 0;text-shadow:1px 1px 2px rgba(0,0,0,0.18);">*FLD</div><div style="position:absolute;left:958.6057031249999px;top:1038.57px;font:700 13.5px/13.5px 'Liberation Sans', sans-serif;color:#6a6a6a;white-space:pre;transform:scaleX(1.0000);transform-origin:0 0;text-shadow:1px 1px 2px rgba(0,0,0,0.18);">Attr:</div><div style="position:absolute;left:991.5947656249999px;top:1038.57px;font:400 13.5px/13.5px 'Liberation Sans', sans-serif;color:#8c8c8c;white-space:pre;transform:scaleX(0.9500);transform-origin:0 0;text-shadow:1px 1px 2px rgba(0,0,0,0.18);">A10</div><div style="position:absolute;left:1022.4140624999999px;top:1038.57px;font:700 13.5px/13.5px 'Liberation Sans', sans-serif;color:#6a6a6a;white-space:pre;transform:scaleX(1.0000);transform-origin:0 0;text-shadow:1px 1px 2px rgba(0,0,0,0.18);">App:</div><div style="position:absolute;left:1057.6531249999998px;top:1038.57px;font:400 13.5px/13.5px 'Liberation Sans', sans-serif;color:#8c8c8c;white-space:pre;transform:scaleX(0.9500);transform-origin:0 0;text-shadow:1px 1px 2px rgba(0,0,0,0.18);">MISHD</div><div style="position:absolute;left:1106.9781249999999px;top:1038.57px;font:700 13.5px/13.5px 'Liberation Sans', sans-serif;color:#6a6a6a;white-space:pre;transform:scaleX(1.0000);transform-origin:0 0;text-shadow:1px 1px 2px rgba(0,0,0,0.18);">Env:</div><div style="position:absolute;left:1140.7328125px;top:1038.57px;font:400 13.5px/13.5px 'Liberation Sans', sans-serif;color:#8c8c8c;white-space:pre;transform:scaleX(0.9500);transform-origin:0 0;text-shadow:1px 1px 2px rgba(0,0,0,0.18);">*PRD</div><div style="position:absolute;left:539px;top:1056.0px;width:1372px;height:0;border-top:1px dashed #dcdcdc"></div><svg style="position:absolute;left:1871.1px;top:1027.3999999999999px;" width="17.8" height="5.8" viewBox="0 0 17.8 5.8"><circle cx="2.9" cy="2.9" r="1.9" fill="#e8e8e8"/><circle cx="8.9" cy="2.9" r="1.9" fill="#e8e8e8"/><circle cx="14.9" cy="2.9" r="1.9" fill="#e8e8e8"/></svg><div style="position:absolute;left:542.5px;top:1062.18px;font:400 15.5px/15.5px 'Liberation Sans', sans-serif;color:#2a2ab0;white-space:pre;transform:scaleX(1.0200);transform-origin:0 0;text-shadow:1px 1px 2px rgba(0,0,0,0.18);">#PART - Part #</div><div style="position:absolute;left:542.5px;top:1084.57px;font:700 13.5px/13.5px 'Liberation Sans', sans-serif;color:#6a6a6a;white-space:pre;transform:scaleX(1.0000);transform-origin:0 0;text-shadow:1px 1px 2px rgba(0,0,0,0.18);">Location:</div><div style="position:absolute;left:607.74375px;top:1084.57px;font:400 13.5px/13.5px 'Liberation Sans', sans-serif;color:#8c8c8c;white-space:pre;transform:scaleX(0.9800);transform-origin:0 0;text-shadow:1px 1px 2px rgba(0,0,0,0.18);">/QSYS.LIB/MISDEMPRD.LIB/ITEMS.FILE/</div><div style="position:absolute;left:867.16734375px;top:1084.57px;font:700 13.5px/13.5px 'Liberation Sans', sans-serif;color:#6a6a6a;white-space:pre;transform:scaleX(1.0000);transform-origin:0 0;text-shadow:1px 1px 2px rgba(0,0,0,0.18);">Type:</div><div style="position:absolute;left:906.6704687499999px;top:1084.57px;font:400 13.5px/13.5px 'Liberation Sans', sans-serif;color:#8c8c8c;white-space:pre;transform:scaleX(0.9500);transform-origin:0 0;text-shadow:1px 1px 2px rgba(0,0,0,0.18);">*FLD</div><div style="position:absolute;left:943.8903906249999px;top:1084.57px;font:700 13.5px/13.5px 'Liberation Sans', sans-serif;color:#6a6a6a;white-space:pre;transform:scaleX(1.0000);transform-origin:0 0;text-shadow:1px 1px 2px rgba(0,0,0,0.18);">Attr:</div><div style="position:absolute;left:976.8794531249999px;top:1084.57px;font:400 13.5px/13.5px 'Liberation Sans', sans-serif;color:#8c8c8c;white-space:pre;transform:scaleX(0.9500);transform-origin:0 0;text-shadow:1px 1px 2px rgba(0,0,0,0.18);">A15</div><div style="position:absolute;left:1007.6987499999999px;top:1084.57px;font:700 13.5px/13.5px 'Liberation Sans', sans-serif;color:#6a6a6a;white-space:pre;transform:scaleX(1.0000);transform-origin:0 0;text-shadow:1px 1px 2px rgba(0,0,0,0.18);">App:</div><div style="position:absolute;left:1042.9378124999998px;top:1084.57px;font:400 13.5px/13.5px 'Liberation Sans', sans-serif;color:#8c8c8c;white-space:pre;transform:scaleX(0.9500);transform-origin:0 0;text-shadow:1px 1px 2px rgba(0,0,0,0.18);">MISHD</div><div style="position:absolute;left:1092.2628124999999px;top:1084.57px;font:700 13.5px/13.5px 'Liberation Sans', sans-serif;color:#6a6a6a;white-space:pre;transform:scaleX(1.0000);transform-origin:0 0;text-shadow:1px 1px 2px rgba(0,0,0,0.18);">Env:</div><div style="position:absolute;left:1126.0175px;top:1084.57px;font:400 13.5px/13.5px 'Liberation Sans', sans-serif;color:#8c8c8c;white-space:pre;transform:scaleX(0.9500);transform-origin:0 0;text-shadow:1px 1px 2px rgba(0,0,0,0.18);">*PRD</div><div style="position:absolute;left:539px;top:1102.0px;width:1372px;height:0;border-top:1px dashed #dcdcdc"></div><svg style="position:absolute;left:1871.1px;top:1073.3999999999999px;" width="17.8" height="5.8" viewBox="0 0 17.8 5.8"><circle cx="2.9" cy="2.9" r="1.9" fill="#e8e8e8"/><circle cx="8.9" cy="2.9" r="1.9" fill="#e8e8e8"/><circle cx="14.9" cy="2.9" r="1.9" fill="#e8e8e8"/></svg><div style="position:absolute;left:542.5px;top:1108.18px;font:400 15.5px/15.5px 'Liberation Sans', sans-serif;color:#2a2ab0;white-space:pre;transform:scaleX(1.0200);transform-origin:0 0;text-shadow:1px 1px 2px rgba(0,0,0,0.18);">#PART - Part #</div><div style="position:absolute;left:542.5px;top:1130.57px;font:700 13.5px/13.5px 'Liberation Sans', sans-serif;color:#6a6a6a;white-space:pre;transform:scaleX(1.0000);transform-origin:0 0;text-shadow:1px 1px 2px rgba(0,0,0,0.18);">Location:</div><div style="position:absolute;left:607.74375px;top:1130.57px;font:400 13.5px/13.5px 'Liberation Sans', sans-serif;color:#8c8c8c;white-space:pre;transform:scaleX(0.9800);transform-origin:0 0;text-shadow:1px 1px 2px rgba(0,0,0,0.18);">/QSYS.LIB/MISDEMPRD.LIB/ITEMSL1.FILE/</div><div style="position:absolute;left:881.88265625px;top:1130.57px;font:700 13.5px/13.5px 'Liberation Sans', sans-serif;color:#6a6a6a;white-space:pre;transform:scaleX(1.0000);transform-origin:0 0;text-shadow:1px 1px 2px rgba(0,0,0,0.18);">Type:</div><div style="position:absolute;left:921.3857812499999px;top:1130.57px;font:400 13.5px/13.5px 'Liberation Sans', sans-serif;color:#8c8c8c;white-space:pre;transform:scaleX(0.9500);transform-origin:0 0;text-shadow:1px 1px 2px rgba(0,0,0,0.18);">*FLD</div><div style="position:absolute;left:958.6057031249999px;top:1130.57px;font:700 13.5px/13.5px 'Liberation Sans', sans-serif;color:#6a6a6a;white-space:pre;transform:scaleX(1.0000);transform-origin:0 0;text-shadow:1px 1px 2px rgba(0,0,0,0.18);">Attr:</div><div style="position:absolute;left:991.5947656249999px;top:1130.57px;font:400 13.5px/13.5px 'Liberation Sans', sans-serif;color:#8c8c8c;white-space:pre;transform:scaleX(0.9500);transform-origin:0 0;text-shadow:1px 1px 2px rgba(0,0,0,0.18);">A15</div><div style="position:absolute;left:1022.4140624999999px;top:1130.57px;font:700 13.5px/13.5px 'Liberation Sans', sans-serif;color:#6a6a6a;white-space:pre;transform:scaleX(1.0000);transform-origin:0 0;text-shadow:1px 1px 2px rgba(0,0,0,0.18);">App:</div><div style="position:absolute;left:1057.6531249999998px;top:1130.57px;font:400 13.5px/13.5px 'Liberation Sans', sans-serif;color:#8c8c8c;white-space:pre;transform:scaleX(0.9500);transform-origin:0 0;text-shadow:1px 1px 2px rgba(0,0,0,0.18);">MISHD</div><div style="position:absolute;left:1106.9781249999999px;top:1130.57px;font:700 13.5px/13.5px 'Liberation Sans', sans-serif;color:#6a6a6a;white-space:pre;transform:scaleX(1.0000);transform-origin:0 0;text-shadow:1px 1px 2px rgba(0,0,0,0.18);">Env:</div><div style="position:absolute;left:1140.7328125px;top:1130.57px;font:400 13.5px/13.5px 'Liberation Sans', sans-serif;color:#8c8c8c;white-space:pre;transform:scaleX(0.9500);transform-origin:0 0;text-shadow:1px 1px 2px rgba(0,0,0,0.18);">*PRD</div><div style="position:absolute;left:539px;top:1148.0px;width:1372px;height:0;border-top:1px dashed #dcdcdc"></div><svg style="position:absolute;left:1871.1px;top:1119.3999999999999px;" width="17.8" height="5.8" viewBox="0 0 17.8 5.8"><circle cx="2.9" cy="2.9" r="1.9" fill="#e8e8e8"/><circle cx="8.9" cy="2.9" r="1.9" fill="#e8e8e8"/><circle cx="14.9" cy="2.9" r="1.9" fill="#e8e8e8"/></svg><div style="position:absolute;left:1115px;top:1054.3px;width:219.7px;height:37px;border:1px solid #dee2e6;border-radius:6px;background:#fff;box-sizing:border-box"></div><div style="position:absolute;left:1115px;top:1054.3px;width:37.6px;height:37px;font:400 18px/37px 'Liberation Sans',sans-serif;color:#6c757d;text-align:center">&laquo;&laquo;</div><div style="position:absolute;left:1152.6px;top:1054.3px;width:1px;height:37px;background:#dee2e6"></div><div style="position:absolute;left:1152.6px;top:1054.3px;width:28px;height:37px;font:400 18px/37px 'Liberation Sans',sans-serif;color:#6c757d;text-align:center">&laquo;</div><div style="position:absolute;left:1180.6px;top:1054.3px;width:27.8px;height:37px;background:#0d6efd"></div><div style="position:absolute;left:1180.6px;top:1054.3px;width:27.8px;height:37px;font:400 18px/37px 'Liberation Sans',sans-serif;color:#fff;text-align:center">1</div><div style="position:absolute;left:1208.3999999999999px;top:1054.3px;width:1px;height:37px;background:#dee2e6"></div><div style="position:absolute;left:1208.3999999999999px;top:1054.3px;width:30.5px;height:37px;font:400 18px/37px 'Liberation Sans',sans-serif;color:#0d6efd;text-align:center">2</div><div style="position:absolute;left:1238.8999999999999px;top:1054.3px;width:1px;height:37px;background:#dee2e6"></div><div style="position:absolute;left:1238.8999999999999px;top:1054.3px;width:29.5px;height:37px;font:400 18px/37px 'Liberation Sans',sans-serif;color:#0d6efd;text-align:center">3</div><div style="position:absolute;left:1268.3999999999999px;top:1054.3px;width:1px;height:37px;background:#dee2e6"></div><div style="position:absolute;left:1268.3999999999999px;top:1054.3px;width:29.2px;height:37px;font:400 18px/37px 'Liberation Sans',sans-serif;color:#0d6efd;text-align:center">&raquo;</div><div style="position:absolute;left:1297.6px;top:1054.3px;width:1px;height:37px;background:#dee2e6"></div><div style="position:absolute;left:1297.6px;top:1054.3px;width:37.1px;height:37px;font:400 18px/37px 'Liberation Sans',sans-serif;color:#0d6efd;text-align:center">&raquo;&raquo;</div><div style="position:absolute;left:1141px;top:1094.72px;font:400 14.5px/14.5px 'Liberation Sans', sans-serif;color:#777;white-space:pre;transform:scaleX(0.9113);transform-origin:0 0;">Total: 12697</div><div style="position:absolute;left:1226px;top:1094.72px;font:400 14.5px/14.5px 'Liberation Sans', sans-serif;color:#777;white-space:pre;transform:scaleX(0.9193);transform-origin:0 0;">Page Size: 50</div><div style="position:absolute;left:0px;top:1113px;width:1920px;height:27px;background:#6e5494"></div><div style="position:absolute;left:0px;top:1113px;width:43px;height:27px;background:#4c3a6b"></div><svg style="position:absolute;left:13px;top:1116px;" width="18" height="20" viewBox="0 0 18 20"><path d="M2.5 7 L8.5 12 L2.5 17 M14.5 2 L9 6.5 L14.5 11" fill="none" stroke="#fff" stroke-width="1.4"/></svg><svg style="position:absolute;left:52px;top:1117px;" width="19" height="19" viewBox="0 0 19 19"><circle cx="9.3" cy="9.3" r="7.6" fill="none" stroke="#fff" stroke-width="1.3"/><path d="M6 6 L12.6 12.6 M12.6 6 L6 12.6" stroke="#fff" stroke-width="1.3"/></svg><div style="position:absolute;left:74px;top:1118.38px;font:400 15.5px/15.5px 'Liberation Sans', sans-serif;color:#fff;white-space:pre;transform:scaleX(0.9280);transform-origin:0 0;">0</div><svg style="position:absolute;left:86.5px;top:1117px;" width="18" height="17" viewBox="0 0 18 17"><path d="M9 1.5 L16.8 15.5 H1.2 Z" fill="none" stroke="#fff" stroke-width="1.3" stroke-linejoin="round"/><path d="M9 6 V11" stroke="#fff" stroke-width="1.4"/><circle cx="9" cy="13.2" r="0.9" fill="#fff"/></svg><div style="position:absolute;left:108px;top:1118.38px;font:400 15.5px/15.5px 'Liberation Sans', sans-serif;color:#fff;white-space:pre;transform:scaleX(0.9280);transform-origin:0 0;">0</div><svg style="position:absolute;left:137px;top:1117px;" width="17" height="17" viewBox="0 0 17 17"><circle cx="8.5" cy="6.5" r="1.8" fill="none" stroke="#fff" stroke-width="1.2"/><path d="M8.5 8.5 L5 16 M8.5 8.5 L12 16 M6 13 H11" stroke="#fff" stroke-width="1.2" fill="none"/><path d="M4.5 2.5 Q2 6.5 4.5 10.5 M12.5 2.5 Q15 6.5 12.5 10.5 M2.2 1 Q-1 6.5 2.2 12 M14.8 1 Q18 6.5 14.8 12" stroke="#fff" stroke-width="1.1" fill="none"/></svg><div style="position:absolute;left:157px;top:1118.38px;font:400 15.5px/15.5px 'Liberation Sans', sans-serif;color:#fff;white-space:pre;transform:scaleX(0.9280);transform-origin:0 0;">0</div><div style="position:absolute;left:1463px;top:1118.63px;font:400 15.5px/15.5px 'Liberation Sans', sans-serif;color:#fff;white-space:pre;transform:scaleX(0.9219);transform-origin:0 0;">Ln 47, Col 44</div><div style="position:absolute;left:1568px;top:1118.63px;font:400 15.5px/15.5px 'Liberation Sans', sans-serif;color:#fff;white-space:pre;transform:scaleX(0.8813);transform-origin:0 0;">Spaces: 2</div><div style="position:absolute;left:1648.75px;top:1118.63px;font:400 15.5px/15.5px 'Liberation Sans', sans-serif;color:#fff;white-space:pre;transform:scaleX(0.8995);transform-origin:0 0;">UTF-8</div><div style="position:absolute;left:1708.25px;top:1118.63px;font:400 15.5px/15.5px 'Liberation Sans', sans-serif;color:#fff;white-space:pre;transform:scaleX(0.8153);transform-origin:0 0;">CRLF</div><div style="position:absolute;left:1761.25px;top:1118.63px;font:400 15.5px/15.5px 'Liberation Sans', sans-serif;color:#fff;white-space:pre;transform:scaleX(0.8785);transform-origin:0 0;">DDS</div><div style="position:absolute;left:1831.75px;top:1118.63px;font:400 15.5px/15.5px 'Liberation Sans', sans-serif;color:#fff;white-space:pre;transform:scaleX(0.9139);transform-origin:0 0;">Spell</div><svg style="position:absolute;left:1810px;top:1117px;" width="18" height="18" viewBox="0 0 18 18"><path d="M3.2 5 A7 7 0 1 1 2.2 9.5" fill="none" stroke="#fff" stroke-width="1.4"/><path d="M1 2.5 V6.5 H5" fill="none" stroke="#fff" stroke-width="1.4"/><path d="M9.2 5 V9.5 L12 11.5" fill="none" stroke="#fff" stroke-width="1.4"/></svg><svg style="position:absolute;left:1885px;top:1116px;" width="16" height="19" viewBox="0 0 16 19"><path d="M3 13.5 V8 Q3 2.8 8 2.8 Q13 2.8 13 8 V13.5 L14.5 15 H1.5 Z" fill="none" stroke="#fff" stroke-width="1.3" stroke-linejoin="round"/><path d="M6.3 16.8 Q8 18.5 9.7 16.8" fill="none" stroke="#fff" stroke-width="1.3"/></svg><svg style="position:absolute;left:0;top:0;filter:drop-shadow(0.8px 0.8px 0.8px rgba(0,0,0,0.35))" width="1920" height="1140" viewBox="0 0 1920 1140"><g fill="#7422e0"><path d="M241.40 101.00 L265.87 96.82 L259.49 93.46 L314.95 63.36 L313.05 59.84 L257.58 89.94 L258.24 82.76 Z"/><path d="M632.60 70.60 L657.22 73.80 L652.11 68.71 L718.39 55.36 L717.61 51.44 L651.32 64.79 L654.06 58.12 Z"/><path d="M1344.50 67.30 L1369.24 69.29 L1363.89 64.46 L1403.89 54.34 L1402.91 50.46 L1362.91 60.58 L1365.32 53.78 Z"/><path d="M28.40 451.80 L20.54 475.35 L26.51 471.31 L26.80 519.71 L30.80 519.69 L30.51 471.29 L36.54 475.25 Z"/><path d="M1077.10 777.60 L1069.04 801.08 L1075.05 797.10 L1075.00 818.40 L1079.00 818.40 L1079.05 797.10 L1085.04 801.12 Z"/><path d="M1214.20 778.60 L1205.58 801.88 L1211.68 798.04 L1211.10 819.95 L1215.10 820.05 L1215.68 798.15 L1221.57 802.30 Z"/><path d="M1341.25 777.50 L1333.57 801.11 L1339.52 797.03 L1339.90 824.73 L1343.90 824.67 L1343.52 796.97 L1349.57 800.89 Z"/><path d="M1454.80 773.90 L1446.37 797.25 L1452.44 793.36 L1452.00 817.66 L1456.00 817.74 L1456.44 793.43 L1462.37 797.54 Z"/></g></svg><svg style="position:absolute;left:833px;top:449px;" width="16" height="24" viewBox="0 0 16 24"><path d="M1.5 1.5 V18.5 L5.5 14.5 L8.5 21.5 L11 20.5 L8 13.5 H13.5 Z" fill="#fff" stroke="#222" stroke-width="1.2" stroke-linejoin="round"/></svg></body></html>
